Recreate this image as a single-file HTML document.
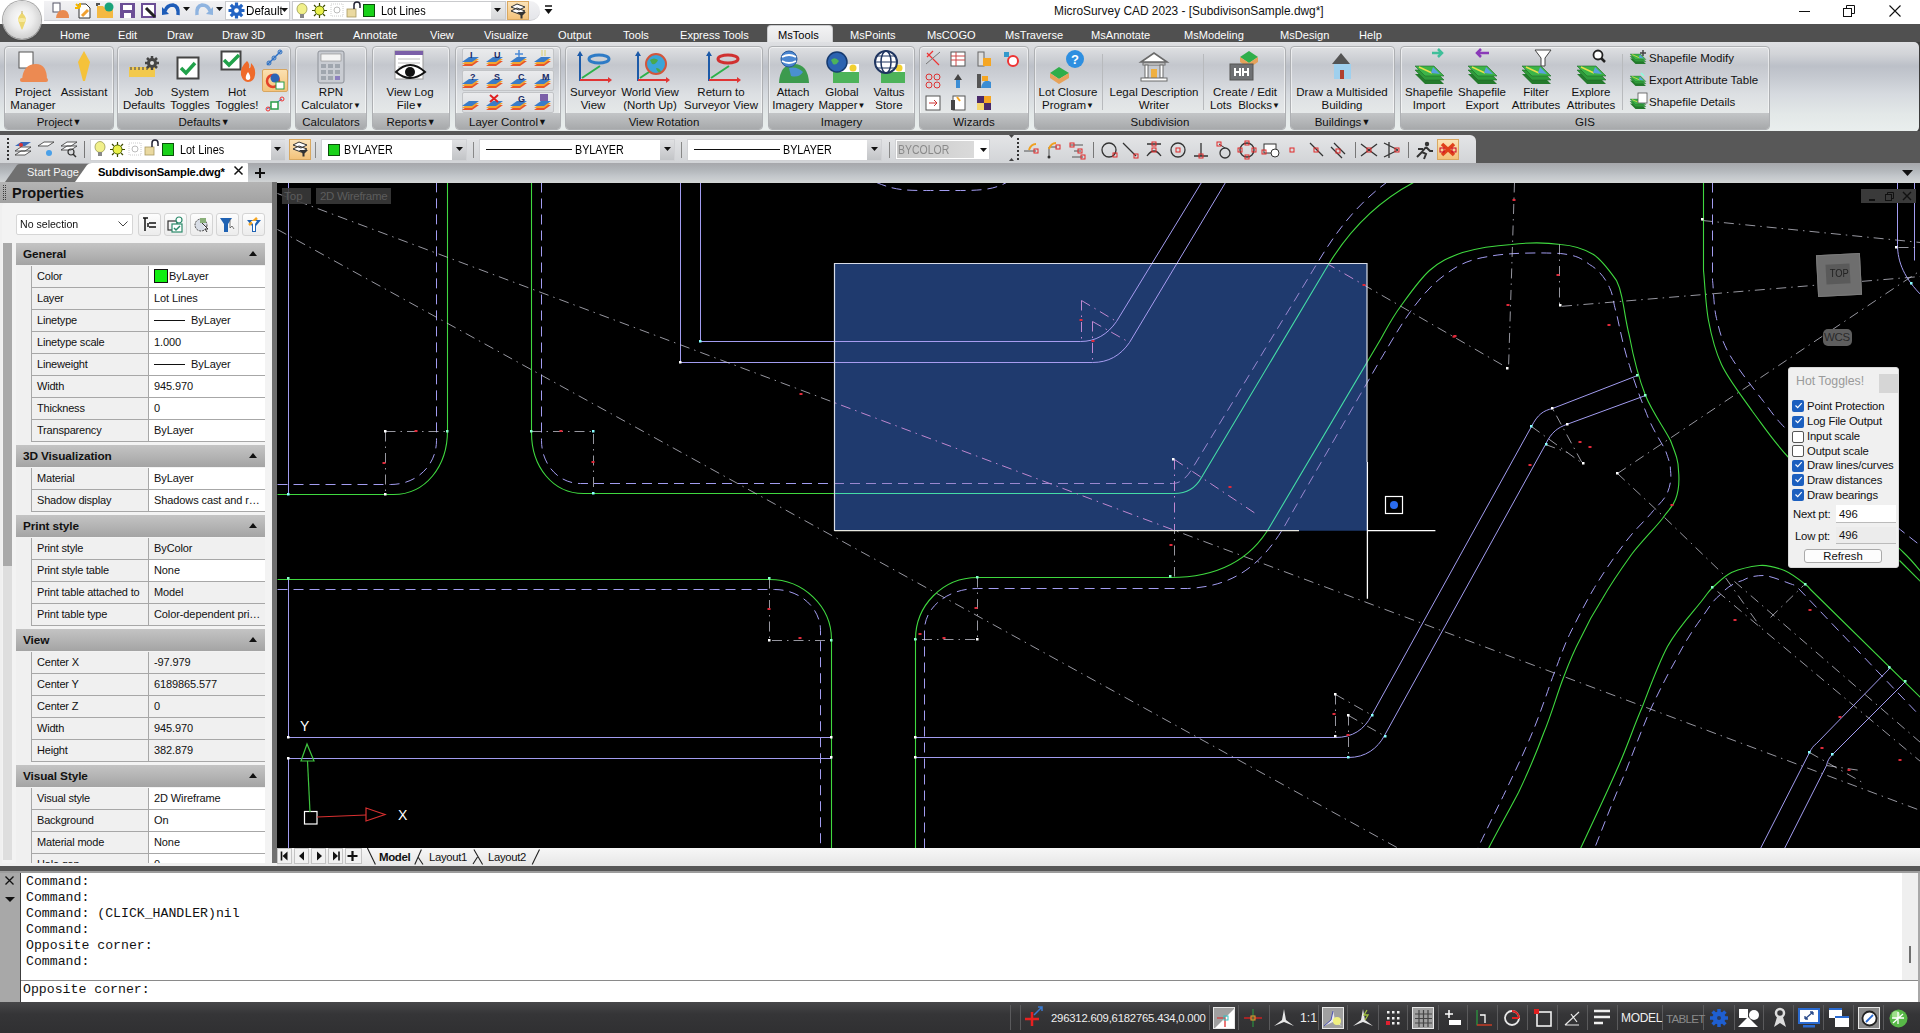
<!DOCTYPE html>
<html><head><meta charset="utf-8">
<style>
*{margin:0;padding:0;box-sizing:border-box}
html,body{width:1920px;height:1033px;overflow:hidden;background:#3c3c3c;font-family:"Liberation Sans",sans-serif;font-size:12px;color:#000}
.a{position:absolute}
svg{position:absolute;overflow:visible}
#title{left:0;top:0;width:1920px;height:24px;background:#fff}
#tabs{left:0;top:24px;width:1920px;height:18px;background:#505050}
#ribbon{left:0;top:42px;width:1919px;height:90px;border-radius:0 5px 5px 0;background:linear-gradient(#dfe0e3 0px,#d2d4d8 12px,#bcc0c8 24px,#c6cad1 36px,#d6dadf 52px,#e3e8e8 72px,#eaefee 90px)}
#band{left:0;top:131px;width:1920px;height:32px;background:#585858}
#tb{left:0;top:135px;width:1476px;height:28px;background:linear-gradient(#e4e5e7,#d2d4d7);border-radius:0 6px 0 0}
#doctabs{left:0;top:163px;width:1920px;height:19px;background:linear-gradient(#a6a7ab,#b1b5b9 35%,#c3c7cb 70%,#d0d3d4)}
.tab{position:absolute;top:27px;color:#fff;font-size:11.1px;line-height:16px;white-space:nowrap}
.pn{position:absolute;top:46px;height:84px;border:1px solid #aeb0b3;box-shadow:inset 0 0 0 1px rgba(255,255,255,.55);border-radius:4px;background:linear-gradient(#dfe0e3 0px,#d3d5d9 8px,#c4c7cd 18px,#cdd0d6 30px,#dde0e3 48px,#e6e9e9 68px,#e9ecec 84px);overflow:hidden}
.pl{position:absolute;left:0;right:0;bottom:0;height:16px;padding-top:2px;background:linear-gradient(#c3c5c7,#a7a9ab);text-align:center;font-size:11.5px;line-height:15px;color:#111;white-space:nowrap}
.bt{position:absolute;top:86px;font-size:11.5px;line-height:12.7px;text-align:center;white-space:nowrap;color:#111;transform:translateX(-50%)}
.ic{position:absolute}
.sep{position:absolute;width:1px;background:#b8babd}
.cb{position:absolute;background:#fff;border:1px solid #b5b7ba}
.dd{position:absolute;right:0;top:0;bottom:0;width:14px;background:linear-gradient(#e2e3e5,#c4c6c9)}
.dd:after{content:"";position:absolute;left:4px;top:8px;border-left:3px solid transparent;border-right:3px solid transparent;border-top:4px solid #111}
.prow{position:absolute;left:31px;width:234px;height:22px;border-bottom:1px solid #a7a7a7;border-left:1px solid #a7a7a7;font-size:11px;line-height:21px;color:#111}
.prow .n{position:absolute;left:0;top:0;width:117px;height:21px;background:#f0f0f0;border-right:1px solid #a7a7a7;padding-left:5px;white-space:nowrap;overflow:hidden;letter-spacing:-0.2px}
.prow .v{position:absolute;left:117px;top:0;width:116px;height:21px;background:#fff;padding-left:5px;padding-right:2px;white-space:nowrap;overflow:hidden;text-overflow:ellipsis;letter-spacing:-0.1px}
.phd{position:absolute;left:16px;width:249px;height:22px;background:linear-gradient(#c4c4c4,#a4a4a4);font-weight:bold;font-size:11.8px;line-height:22px;padding-left:7px;color:#111;letter-spacing:-0.1px}
.phd:after{content:"";position:absolute;right:8px;top:8px;border-left:4px solid transparent;border-right:4px solid transparent;border-bottom:5px solid #111}
</style></head><body>
<div id="title" class="a"></div>
<div id="tabs" class="a"></div>
<!-- QAT strip -->
<div class="a" style="left:44px;top:1px;width:496px;height:20px;background:linear-gradient(#f2f2f4,#e4e5e9);border-bottom:1px solid #cfd0d4;border-radius:0 10px 10px 0"></div>
<!-- app button -->
<div class="a" style="left:3px;top:1px;width:38px;height:38px;border-radius:50%;background:radial-gradient(circle at 50% 45%,#fdfdfd 0%,#ececec 40%,#d2d2d2 70%,#b4b4b4 88%,#8a8a8a 100%);box-shadow:0 0 0 1px #a6a6a6,0 1px 2px rgba(0,0,0,.35)"></div>
<svg style="left:14px;top:10px" width="16" height="22"><path d="M8 3 Q12 6 12 10 L9 18 Q8 21 7 18 L4 10 Q4 6 8 3 Z" fill="#ecd770"/><ellipse cx="8" cy="10" rx="4" ry="2" fill="#f6e9a0"/><path d="M8 1 v3" stroke="#c9b050"/></svg>
<!-- QAT icons -->
<svg style="left:52px;top:2px" width="18" height="17"><rect x="1" y="1" width="7" height="9" fill="#fff" stroke="#556" stroke-width="1"/><path d="M4 16 Q5 8 11 8 Q17 8 17 16 Z" fill="#e98a4f"/></svg>
<svg style="left:74px;top:2px" width="18" height="17"><path d="M5 2 h7 l4 4 v10 h-11 z" fill="#fff" stroke="#333"/><path d="M2 2 l4 4 M6 1 v4 M1 6 h4" stroke="#f5b800" stroke-width="2"/><path d="M8 14 l6 -6" stroke="#f0a030" stroke-width="3"/></svg>
<svg style="left:96px;top:2px" width="18" height="17"><path d="M1 4 h6 l2 2 h8 v10 h-16 z" fill="#f4b942"/><path d="M1 4 v-2 h3" stroke="#555" stroke-width="2" fill="none"/><circle cx="13" cy="5" r="4.5" fill="#1aa37a"/></svg>
<svg style="left:119px;top:2px" width="17" height="17"><rect x="1" y="1" width="15" height="15" fill="#6c4f96"/><rect x="4" y="3" width="9" height="5" fill="#fff"/><rect x="5" y="11" width="7" height="5" fill="#fff"/></svg>
<svg style="left:140px;top:2px" width="18" height="17"><rect x="1" y="1" width="15" height="15" fill="#6c4f96"/><rect x="3" y="3" width="11" height="11" fill="#fff"/><path d="M6 6 l9 9" stroke="#222" stroke-width="3"/></svg>
<svg style="left:162px;top:3px" width="18" height="15"><path d="M3 8 Q5 2 11 2 Q17 3 16 12" stroke="#1d5cb8" stroke-width="3.5" fill="none"/><path d="M0 4 L7 11 L0 12 Z" fill="#1d5cb8"/></svg>
<svg style="left:183px;top:7px" width="8" height="6"><path d="M0 0 h7 l-3.5 4 z" fill="#111"/></svg>
<svg style="left:195px;top:3px" width="18" height="15"><path d="M15 8 Q13 2 7 2 Q1 3 2 12" stroke="#8fb4e0" stroke-width="3.5" fill="none"/><path d="M18 4 L11 11 L18 12 Z" fill="#8fb4e0"/></svg>
<svg style="left:216px;top:7px" width="8" height="6"><path d="M0 0 h7 l-3.5 4 z" fill="#111"/></svg>
<!-- Default combo -->
<div class="cb" style="left:225px;top:1px;width:65px;height:19px;border-color:#c9cacd"></div>
<svg style="left:228px;top:2px" width="17" height="17"><circle cx="8.5" cy="8.5" r="5.5" fill="#2364c4"/><path d="M8.5 0.5 v16 M0.5 8.5 h16 M2.8 2.8 l11.4 11.4 M14.2 2.8 l-11.4 11.4" stroke="#2364c4" stroke-width="3.2"/><circle cx="8.5" cy="8.5" r="2.3" fill="#fff"/></svg>
<div class="a" style="left:246px;top:3px;font-size:12.5px;line-height:16px;color:#000;transform:scaleX(.93);transform-origin:0 0">Default</div>
<svg style="left:281px;top:8px" width="8" height="6"><path d="M0 0 h7 l-3.5 4 z" fill="#111"/></svg>
<!-- Layer combo -->
<div class="cb" style="left:292px;top:1px;width:214px;height:19px;border-color:#c9cacd"></div>
<div class="a" style="left:491px;top:2px;width:14px;height:17px;background:linear-gradient(#eceded,#d7d8da)"></div>
<svg style="left:494px;top:8px" width="8" height="6"><path d="M0 0 h7 l-3.5 4 z" fill="#111"/></svg>
<svg style="left:296px;top:3px" width="14" height="17"><ellipse cx="6" cy="6" rx="5" ry="5.5" fill="#f1f08a" stroke="#9a9a50" stroke-width=".8"/><rect x="4" y="11" width="4" height="4" fill="#888"/></svg>
<svg style="left:312px;top:3px" width="15" height="15"><circle cx="7.5" cy="7.5" r="4.5" fill="#e9f04a" stroke="#556b00" stroke-width="1"/><path d="M7.5 0 v3 M7.5 12 v3 M0 7.5 h3 M12 7.5 h3 M2 2 l2 2 M11 11 l2 2 M13 2 l-2 2 M2 13 l2 -2" stroke="#3d4a00" stroke-width="1.2"/></svg>
<svg style="left:330px;top:3px" width="14" height="14"><rect x="1" y="1" width="12" height="12" fill="none" stroke="#ccc" stroke-dasharray="1 1"/><circle cx="7" cy="7" r="3" fill="none" stroke="#bbb"/></svg>
<svg style="left:346px;top:2px" width="15" height="16"><rect x="1" y="7" width="9" height="8" fill="#ead9a0" stroke="#a89860" stroke-width=".8"/><path d="M8 7 v-4 a3 3 0 0 1 6 0 v3" stroke="#223" stroke-width="1.5" fill="none"/></svg>
<div class="a" style="left:363px;top:4px;width:12px;height:13px;background:#19d119;border:1px solid #0a500a"></div>
<div class="a" style="left:381px;top:3px;font-size:12.5px;line-height:16px;transform:scaleX(.88);transform-origin:0 0">Lot Lines</div>
<!-- filter btn -->
<div class="a" style="left:507px;top:1px;width:22px;height:19px;background:linear-gradient(#fbe3b8,#f3c27a);border:1px solid #d9a860"></div>
<svg style="left:509px;top:3px" width="18" height="16"><path d="M2 4 l6 -3 l8 3 l-6 3 z M2 8 l6 -3 l8 3 l-6 3 z" fill="#fff" stroke="#333" stroke-width="1"/><path d="M8 9 h9 l-3.5 3.5 v3 l-2 0 v-3 z" fill="#333"/></svg>
<svg style="left:544px;top:5px" width="9" height="10"><path d="M1 1 h7" stroke="#111" stroke-width="1.5"/><path d="M0.5 4 h8 l-4 5 z" fill="#111"/></svg>
<!-- title -->
<div class="a" style="left:1054px;top:3px;font-size:11.9px;line-height:16px;color:#111;white-space:nowrap">MicroSurvey CAD 2023 - [SubdivisonSample.dwg*]</div>
<!-- window controls -->
<div class="a" style="left:1799px;top:11px;width:11px;height:1px;background:#111"></div>
<svg style="left:1843px;top:5px" width="12" height="12"><rect x="0.5" y="3.5" width="8" height="8" fill="none" stroke="#111"/><path d="M3.5 3.5 v-3 h8 v8 h-3" fill="none" stroke="#111"/></svg>
<svg style="left:1889px;top:5px" width="12" height="12"><path d="M0.5 0.5 L11.5 11.5 M11.5 0.5 L0.5 11.5" stroke="#111" stroke-width="1.1"/></svg>
<!-- ribbon tabs -->
<div class="a" style="left:767px;top:25px;width:66px;height:19px;background:linear-gradient(#f3f3f4,#e3e4e6);border-radius:4px 4px 0 0;border:1px solid #c9cacd;border-bottom:none"></div>
<div class="tab" style="left:60px">Home</div>
<div class="tab" style="left:118px">Edit</div>
<div class="tab" style="left:167px">Draw</div>
<div class="tab" style="left:222px">Draw 3D</div>
<div class="tab" style="left:295px">Insert</div>
<div class="tab" style="left:353px">Annotate</div>
<div class="tab" style="left:430px">View</div>
<div class="tab" style="left:484px">Visualize</div>
<div class="tab" style="left:558px">Output</div>
<div class="tab" style="left:623px">Tools</div>
<div class="tab" style="left:680px">Express Tools</div>
<div class="tab" style="left:778px;color:#000">MsTools</div>
<div class="tab" style="left:850px">MsPoints</div>
<div class="tab" style="left:927px">MsCOGO</div>
<div class="tab" style="left:1005px">MsTraverse</div>
<div class="tab" style="left:1091px">MsAnnotate</div>
<div class="tab" style="left:1184px">MsModeling</div>
<div class="tab" style="left:1280px">MsDesign</div>
<div class="tab" style="left:1359px">Help</div>
<div id="ribbon" class="a"></div>
<div class="pn" style="left:4px;width:110px"><div class="pl">Project<span style="font-size:9px;vertical-align:1px">&#9660;</span></div></div>
<div class="pn" style="left:117px;width:174px"><div class="pl">Defaults<span style="font-size:9px;vertical-align:1px">&#9660;</span></div></div>
<div class="pn" style="left:295px;width:72px"><div class="pl">Calculators</div></div>
<div class="pn" style="left:372px;width:78px"><div class="pl">Reports<span style="font-size:9px;vertical-align:1px">&#9660;</span></div></div>
<div class="pn" style="left:455px;width:106px"><div class="pl">Layer Control<span style="font-size:9px;vertical-align:1px">&#9660;</span></div></div>
<div class="pn" style="left:565px;width:198px"><div class="pl">View Rotation</div></div>
<div class="pn" style="left:768px;width:147px"><div class="pl">Imagery</div></div>
<div class="pn" style="left:919px;width:110px"><div class="pl">Wizards</div></div>
<div class="pn" style="left:1034px;width:252px"><div class="pl">Subdivision</div></div>
<div class="pn" style="left:1290px;width:105px"><div class="pl">Buildings<span style="font-size:9px;vertical-align:1px">&#9660;</span></div></div>
<div class="pn" style="left:1400px;width:370px"><div class="pl">GIS</div></div>
<div class="bt" style="left:33px">Project<br>Manager</div>
<div class="bt" style="left:84px">Assistant</div>
<div class="bt" style="left:144px">Job<br>Defaults</div>
<div class="bt" style="left:190px">System<br>Toggles</div>
<div class="bt" style="left:237px">Hot<br>Toggles!</div>
<div class="bt" style="left:331px">RPN<br>Calculator<span style="font-size:8px;vertical-align:1px">&#9660;</span></div>
<div class="bt" style="left:410px">View Log<br>File<span style="font-size:8px;vertical-align:1px">&#9660;</span></div>
<div class="bt" style="left:593px">Surveyor<br>View</div>
<div class="bt" style="left:650px">World View<br>(North Up)</div>
<div class="bt" style="left:721px">Return to<br>Surveyor View</div>
<div class="bt" style="left:793px">Attach<br>Imagery</div>
<div class="bt" style="left:842px">Global<br>Mapper<span style="font-size:8px;vertical-align:1px">&#9660;</span></div>
<div class="bt" style="left:889px">Valtus<br>Store</div>
<div class="bt" style="left:1068px">Lot Closure<br>Program<span style="font-size:8px;vertical-align:1px">&#9660;</span></div>
<div class="bt" style="left:1154px">Legal Description<br>Writer</div>
<div class="bt" style="left:1245px">Create / Edit<br>Lots&nbsp; Blocks<span style="font-size:8px;vertical-align:1px">&#9660;</span></div>
<div class="bt" style="left:1342px">Draw a Multisided<br>Building</div>
<div class="bt" style="left:1429px">Shapefile<br>Import</div>
<div class="bt" style="left:1482px">Shapefile<br>Export</div>
<div class="bt" style="left:1536px">Filter<br>Attributes</div>
<div class="bt" style="left:1591px">Explore<br>Attributes</div>
<div class="a" style="left:1649px;top:51px;font-size:11.5px;line-height:14px;white-space:nowrap;color:#111">Shapefile Modify</div>
<div class="a" style="left:1649px;top:73px;font-size:11.5px;line-height:14px;white-space:nowrap;color:#111">Export Attribute Table</div>
<div class="a" style="left:1649px;top:95px;font-size:11.5px;line-height:14px;white-space:nowrap;color:#111">Shapefile Details</div>
<div class="sep" style="left:1102px;top:54px;height:56px"></div>
<div class="sep" style="left:1203px;top:54px;height:56px"></div>
<div class="sep" style="left:1622px;top:54px;height:56px"></div>
<svg style="left:17px;top:50px" width="32" height="34"><rect x="2" y="2" width="14" height="16" fill="#fff" stroke="#555"/><path d="M5 30 Q6 14 19 14 Q30 14 30 30 Z" fill="#ec8a52"/><rect x="3" y="28" width="28" height="4" rx="2" fill="#ec8a52"/></svg>
<svg style="left:76px;top:50px" width="16" height="32"><path d="M8 1 L14 12 L9 31 L7 31 L2 12 Z" fill="#f5c23a"/></svg>
<svg style="left:128px;top:55px" width="34" height="26"><rect x="1" y="12" width="26" height="10" fill="#f2c94c"/><path d="M3 12 v3 M7 12 v3 M11 12 v3 M15 12 v3 M19 12 v3" stroke="#555" stroke-width="1.2"/><circle cx="24" cy="8" r="5" fill="#444"/><path d="M24 1 v14 M17 8 h14 M19 3 l10 10 M29 3 l-10 10" stroke="#444" stroke-width="2.5"/><circle cx="24" cy="8" r="2" fill="#ddd"/></svg>
<svg style="left:176px;top:56px" width="26" height="24"><rect x="1.5" y="1.5" width="21" height="21" fill="#fff" stroke="#444" stroke-width="2"/><path d="M5 12 l5 5 l9 -10" stroke="#21a24a" stroke-width="3.5" fill="none"/></svg>
<svg style="left:220px;top:50px" width="36" height="36"><rect x="1.5" y="1.5" width="19" height="18" fill="#fff" stroke="#444" stroke-width="2"/><path d="M4 10 l5 5 l10 -10" stroke="#21a24a" stroke-width="3.5" fill="none"/><path d="M27 11 Q20 17 21 25 Q23 32 28 32 Q34 32 35 25 Q36 18 31 13 Q31 19 29 18 Q30 14 27 11 Z" fill="#ef6a2a"/><path d="M28 22 Q25 26 26 29 Q28 31 30 29 Q31 26 28 22 Z" fill="#fff"/></svg>
<svg style="left:265px;top:49px" width="18" height="18"><path d="M2 16 L16 2" stroke="#2a6fc4" stroke-width="1.5"/><circle cx="4" cy="14" r="2" fill="none" stroke="#2a6fc4"/><circle cx="9" cy="9" r="2" fill="none" stroke="#2a6fc4"/><circle cx="15" cy="3" r="2" fill="none" stroke="#2a6fc4"/></svg>
<div class="a" style="left:262px;top:69px;width:26px;height:23px;background:linear-gradient(#fbe0b0,#f4c47c);border:1px solid #d8a660;border-radius:2px"></div>
<svg style="left:265px;top:72px" width="20" height="18"><circle cx="8" cy="9" r="6" fill="none" stroke="#e3422a" stroke-width="2.5"/><circle cx="10" cy="6" r="4.5" fill="#2b63b5"/><rect x="11" y="10" width="8" height="7" fill="#fff" stroke="#2a9d4a"/></svg>
<svg style="left:265px;top:95px" width="20" height="18"><path d="M2 14 L17 4" stroke="#2a6fc4"/><circle cx="3" cy="14" r="2" fill="none" stroke="#e33"/><circle cx="17" cy="4" r="2" fill="none" stroke="#e33"/><rect x="6" y="7" width="7" height="7" fill="#fff" stroke="#2a9d4a" stroke-width="1.5"/></svg>
<svg style="left:316px;top:50px" width="30" height="34"><rect x="2" y="1" width="26" height="32" rx="2" fill="#c9ccd2" stroke="#8c9097"/><rect x="5" y="4" width="20" height="7" fill="#f4f4f4" stroke="#888" stroke-width=".6"/><g fill="#a0a6ae"><rect x="5" y="14" width="5" height="4"/><rect x="12" y="14" width="5" height="4"/><rect x="19" y="14" width="5" height="4"/><rect x="5" y="20" width="5" height="4"/><rect x="12" y="20" width="5" height="4"/><rect x="19" y="20" width="5" height="4"/><rect x="5" y="26" width="5" height="4"/><rect x="12" y="26" width="5" height="4"/><rect x="19" y="26" width="5" height="4" fill="#8c7fbf"/></g></svg>
<svg style="left:393px;top:50px" width="34" height="34"><rect x="2" y="1" width="28" height="28" fill="#fff" stroke="#999"/><rect x="2" y="1" width="28" height="4" fill="#7b5fa8"/><path d="M5 9 h22 M5 13 h22 M5 17 h22 M5 21 h22" stroke="#bbb"/><path d="M3 22 Q17 8 32 22 Q17 34 3 22 Z" fill="#fff" stroke="#111" stroke-width="2"/><circle cx="17" cy="22" r="5" fill="#111"/></svg>
<div class="a" style="left:462px;top:48px;width:92px;height:21px;border:1px solid #c2c4c7;border-radius:2px;background:linear-gradient(#eaebed,#d9dbde)"></div>
<div class="a" style="left:462px;top:70px;width:92px;height:21px;border:1px solid #c2c4c7;border-radius:2px;background:linear-gradient(#eaebed,#d9dbde)"></div>
<div class="a" style="left:462px;top:92px;width:92px;height:21px;border:1px solid #c2c4c7;border-radius:2px;background:linear-gradient(#eaebed,#d9dbde)"></div>
<svg style="left:461px;top:50px" width="20" height="18"><path d="M1 16 L8 11 L18 11 L11 16 Z" fill="#e9542a"/><path d="M1 14 L8 9 L18 9 L11 14 Z" fill="#f2a530"/><path d="M1 12 L8 7 L18 7 L11 12 Z" fill="#3a7cc8"/><text x="9" y="8" font-size="9" font-weight="bold" font-family="Liberation Sans" fill="#1a2a66">I</text></svg>
<svg style="left:485px;top:50px" width="20" height="18"><path d="M1 16 L8 11 L18 11 L11 16 Z" fill="#e9542a"/><path d="M1 14 L8 9 L18 9 L11 14 Z" fill="#f2a530"/><path d="M1 12 L8 7 L18 7 L11 12 Z" fill="#3a7cc8"/><text x="9" y="8" font-size="9" font-weight="bold" font-family="Liberation Sans" fill="#1a2a66">U</text></svg>
<svg style="left:509px;top:50px" width="20" height="18"><path d="M1 16 L8 11 L18 11 L11 16 Z" fill="#e9542a"/><path d="M1 14 L8 9 L18 9 L11 14 Z" fill="#f2a530"/><path d="M1 12 L8 7 L18 7 L11 12 Z" fill="#3a7cc8"/><path d="M10 0 v7 M6 4 h8" stroke="#4a8ad8" stroke-width="1.5"/></svg>
<svg style="left:533px;top:50px" width="20" height="18"><path d="M1 16 L8 11 L18 11 L11 16 Z" fill="#e9542a"/><path d="M1 14 L8 9 L18 9 L11 14 Z" fill="#f2a530"/><path d="M1 12 L8 7 L18 7 L11 12 Z" fill="#3a7cc8"/><path d="M9 0 v6 M12 0 v6" stroke="#dcd06a" stroke-width="1"/></svg>
<svg style="left:461px;top:72px" width="20" height="18"><path d="M1 16 L8 11 L18 11 L11 16 Z" fill="#e9542a"/><path d="M1 14 L8 9 L18 9 L11 14 Z" fill="#f2a530"/><path d="M1 12 L8 7 L18 7 L11 12 Z" fill="#3a7cc8"/><text x="9" y="8" font-size="9" font-weight="bold" font-family="Liberation Sans" fill="#1a2a66">?</text></svg>
<svg style="left:485px;top:72px" width="20" height="18"><path d="M1 16 L8 11 L18 11 L11 16 Z" fill="#e9542a"/><path d="M1 14 L8 9 L18 9 L11 14 Z" fill="#f2a530"/><path d="M1 12 L8 7 L18 7 L11 12 Z" fill="#3a7cc8"/><text x="9" y="8" font-size="9" font-weight="bold" font-family="Liberation Sans" fill="#1a2a66">S</text></svg>
<svg style="left:509px;top:72px" width="20" height="18"><path d="M1 16 L8 11 L18 11 L11 16 Z" fill="#e9542a"/><path d="M1 14 L8 9 L18 9 L11 14 Z" fill="#f2a530"/><path d="M1 12 L8 7 L18 7 L11 12 Z" fill="#3a7cc8"/><text x="9" y="8" font-size="9" font-weight="bold" font-family="Liberation Sans" fill="#1a2a66">C</text></svg>
<svg style="left:533px;top:72px" width="20" height="18"><path d="M1 16 L8 11 L18 11 L11 16 Z" fill="#e9542a"/><path d="M1 14 L8 9 L18 9 L11 14 Z" fill="#f2a530"/><path d="M1 12 L8 7 L18 7 L11 12 Z" fill="#3a7cc8"/><text x="9" y="8" font-size="9" font-weight="bold" font-family="Liberation Sans" fill="#1a2a66">M</text></svg>
<svg style="left:461px;top:94px" width="20" height="18"><path d="M1 16 L8 11 L18 11 L11 16 Z" fill="#e9542a"/><path d="M1 14 L8 9 L18 9 L11 14 Z" fill="#f2a530"/><path d="M1 12 L8 7 L18 7 L11 12 Z" fill="#3a7cc8"/></svg>
<svg style="left:485px;top:94px" width="20" height="18"><path d="M1 16 L8 11 L18 11 L11 16 Z" fill="#e9542a"/><path d="M1 14 L8 9 L18 9 L11 14 Z" fill="#f2a530"/><path d="M1 12 L8 7 L18 7 L11 12 Z" fill="#3a7cc8"/><path d="M5 1 l8 7 M13 1 l-8 7" stroke="#e02020" stroke-width="2"/></svg>
<svg style="left:509px;top:94px" width="20" height="18"><path d="M1 16 L8 11 L18 11 L11 16 Z" fill="#e9542a"/><path d="M1 14 L8 9 L18 9 L11 14 Z" fill="#f2a530"/><path d="M1 12 L8 7 L18 7 L11 12 Z" fill="#3a7cc8"/><text x="9" y="8" font-size="9" font-weight="bold" font-family="Liberation Sans" fill="#1a2a66">G</text></svg>
<svg style="left:533px;top:94px" width="20" height="18"><path d="M1 16 L8 11 L18 11 L11 16 Z" fill="#e9542a"/><path d="M1 14 L8 9 L18 9 L11 14 Z" fill="#f2a530"/><path d="M1 12 L8 7 L18 7 L11 12 Z" fill="#3a7cc8"/><rect x="7" y="0" width="8" height="7" fill="#7b5fa8"/></svg>
<svg style="left:576px;top:50px" width="36" height="34"><path d="M4 4 v26 h28" stroke="#1c5aa8" stroke-width="2" fill="none"/><path d="M4 30 h28" stroke="#e03434" stroke-width="2"/><path d="M32 27 l4 3 l-4 3 z" fill="#e03434"/><path d="M1 6 l3 -5 l3 5 z" fill="#1c5aa8"/><path d="M6 28 L24 16" stroke="#2db04a" stroke-width="2"/><ellipse cx="23" cy="9" rx="10" ry="4" fill="none" stroke="#2e7bc6" stroke-width="3"/></svg>
<svg style="left:634px;top:50px" width="36" height="34"><path d="M4 4 v26 h28" stroke="#1c5aa8" stroke-width="2" fill="none"/><path d="M4 30 h28" stroke="#e03434" stroke-width="2"/><path d="M32 27 l4 3 l-4 3 z" fill="#e03434"/><path d="M1 6 l3 -5 l3 5 z" fill="#1c5aa8"/><path d="M6 28 L24 16" stroke="#2db04a" stroke-width="2"/><circle cx="22" cy="14" r="10" fill="#3ba5d8" stroke="#d2553c" stroke-width="2"/><path d="M16 10 q4 -3 8 0 q-2 5 -6 4 z M22 18 q4 0 5 4 q-4 1 -5 -4" fill="#49a84c"/></svg>
<svg style="left:705px;top:50px" width="36" height="34"><path d="M4 4 v26 h28" stroke="#1c5aa8" stroke-width="2" fill="none"/><path d="M4 30 h28" stroke="#e03434" stroke-width="2"/><path d="M32 27 l4 3 l-4 3 z" fill="#e03434"/><path d="M1 6 l3 -5 l3 5 z" fill="#1c5aa8"/><path d="M6 28 L24 16" stroke="#2db04a" stroke-width="2"/><ellipse cx="23" cy="9" rx="10" ry="4" fill="none" stroke="#d03030" stroke-width="3"/></svg>
<svg style="left:777px;top:50px" width="34" height="34"><path d="M2 33 Q3 14 17 14 Q31 14 32 33 Z" fill="#3c9a4e"/><path d="M12 18 Q20 16 26 22 Q22 28 14 26 Z" fill="#4a90d0"/><circle cx="12" cy="9" r="8" fill="#4a86d0" stroke="#2a5a9a"/><path d="M5 7 q7 -4 14 0 M5 11 q7 4 14 0" stroke="#fff" stroke-width="1.8" fill="none"/></svg>
<svg style="left:825px;top:50px" width="36" height="34"><rect x="8" y="14" width="26" height="19" fill="#4db35a"/><rect x="8" y="14" width="26" height="8" fill="#fff"/><circle cx="28" cy="18" r="3.5" fill="#f2d030"/><circle cx="12" cy="12" r="10" fill="#2c63b0" stroke="#153a70" stroke-width="1.5"/><path d="M6 10 q4 -4 8 1 q-3 5 -6 3 z" fill="#4db35a"/></svg>
<svg style="left:873px;top:50px" width="34" height="34"><rect x="8" y="14" width="24" height="19" fill="#4db35a"/><rect x="8" y="14" width="24" height="8" fill="#fff"/><circle cx="26" cy="18" r="3.5" fill="#f2d030"/><circle cx="13" cy="12" r="11" fill="#fff" stroke="#1f3560" stroke-width="2"/><ellipse cx="13" cy="12" rx="5" ry="11" fill="none" stroke="#1f3560" stroke-width="1.5"/><path d="M2 12 h22 M4 6 h18 M4 18 h18" stroke="#1f3560" stroke-width="1.2"/></svg>
<svg style="left:924px;top:50px" width="18" height="18"><path d="M3 3 l12 12 M9 1 l-6 6" stroke="#e33" stroke-width="1.2"/><path d="M2 14 l14 -12" stroke="#777"/></svg>
<svg style="left:949px;top:50px" width="18" height="18"><rect x="2" y="2" width="14" height="14" fill="#fff" stroke="#555"/><path d="M2 6 h14 M2 10 h14 M7 2 v14" stroke="#c44"/></svg>
<svg style="left:975px;top:50px" width="18" height="18"><rect x="3" y="2" width="6" height="14" fill="#ddd" stroke="#666"/><path d="M8 8 h8 v8 h-8 z" fill="#f5a623"/></svg>
<svg style="left:1002px;top:50px" width="18" height="18"><circle cx="11" cy="11" r="5" fill="#fff" stroke="#e33" stroke-width="2"/><rect x="2" y="2" width="5" height="5" fill="#39c"/></svg>
<svg style="left:924px;top:72px" width="18" height="18"><g fill="none" stroke="#d33"><circle cx="5" cy="5" r="3"/><circle cx="13" cy="5" r="3"/><circle cx="5" cy="13" r="3"/><circle cx="13" cy="13" r="3"/></g></svg>
<svg style="left:949px;top:72px" width="18" height="18"><path d="M9 2 l-4 6 h8 z" fill="#444"/><rect x="7" y="8" width="4" height="8" fill="#3b8dd4"/></svg>
<svg style="left:975px;top:72px" width="18" height="18"><rect x="2" y="2" width="4" height="14" fill="#555"/><path d="M6 16 q2 -10 10 -6 v6 z" fill="#3b8dd4"/><rect x="7" y="4" width="6" height="5" fill="#f5a623"/></svg>
<svg style="left:924px;top:94px" width="18" height="18"><rect x="2" y="2" width="14" height="14" fill="#fff" stroke="#555"/><path d="M5 9 h8 l-3 -3 M13 9 l-3 3" stroke="#c33" fill="none"/></svg>
<svg style="left:949px;top:94px" width="18" height="18"><rect x="4" y="2" width="12" height="14" fill="#fff" stroke="#555"/><rect x="2" y="6" width="4" height="10" fill="#444"/><path d="M8 3 l3 4" stroke="#f5a623" stroke-width="2"/></svg>
<svg style="left:975px;top:94px" width="18" height="18"><rect x="2" y="2" width="14" height="14" fill="#4a2a6a"/><rect x="9" y="2" width="7" height="7" fill="#f5a623"/><rect x="2" y="9" width="7" height="7" fill="#f5d76e"/></svg>
<svg style="left:1045px;top:49px" width="40" height="36"><path d="M5 24 l9 -6 l10 6 l-10 6 z" fill="#2fae4a"/><path d="M5 24 v5 l9 6 l10 -6 v-5 l-10 6 z" fill="#e6a25a"/><circle cx="30" cy="10" r="9" fill="#2e8fe0"/><text x="26" y="15" font-size="13" font-weight="bold" font-family="Liberation Sans" fill="#fff">?</text></svg>
<svg style="left:1140px;top:51px" width="28" height="32"><path d="M1 11 L14 2 L27 11 Z" fill="#fff" stroke="#6a6a6a" stroke-width="1.6"/><rect x="3" y="12" width="22" height="2" fill="#fff" stroke="#6a6a6a"/><rect x="5" y="14" width="3" height="13" fill="#fff" stroke="#6a6a6a"/><rect x="20" y="14" width="3" height="13" fill="#fff" stroke="#6a6a6a"/><rect x="11" y="18" width="6" height="9" fill="#f0b040"/><rect x="1" y="27" width="26" height="3" fill="#fff" stroke="#6a6a6a"/></svg>
<svg style="left:1228px;top:49px" width="36" height="34"><path d="M12 8 l9 -6 l9 6 l-9 6 z" fill="#2fae4a"/><path d="M12 8 v5 l9 6 l9 -6 v-5 l-9 6 z" fill="#e6a25a"/><rect x="2" y="15" width="23" height="16" fill="#6e7073" stroke="#555"/><path d="M7 19 v8 M12 19 v8 M7 23 h5 M15 19 v8 M20 19 v8 M15 23 h5" stroke="#fff" stroke-width="2"/></svg>
<svg style="left:1330px;top:50px" width="26" height="34"><path d="M2 14 L11 3 L20 14 Z" fill="#545454"/><rect x="4" y="14" width="17" height="15" fill="#9fd0ee"/><rect x="10" y="20" width="4" height="9" fill="#b04030"/></svg>
<svg style="left:1412px;top:49px" width="36" height="36"><g transform="translate(3,17) scale(1.0)"><path d="M0 8 L19 8 L29 18 L10 18 Z" fill="#247a2c"/><path d="M0 4 L19 4 L29 14 L10 14 Z" fill="#2f9a3a" stroke="#1f6a28" stroke-width=".6"/><path d="M0 0 L19 0 L29 10 L10 10 Z" fill="#3cb448" stroke="#1f6a28" stroke-width=".6"/><path d="M4 1 L17 7" stroke="#e9e04a" stroke-width="1.4"/><path d="M18 1 L25 8 L16 7 Z" fill="#5aa0e0"/></g><path d="M20 4 h10 M26 0 l4 4 l-4 4" stroke="#3fbf9a" stroke-width="2.5" fill="none"/></svg>
<svg style="left:1465px;top:49px" width="36" height="36"><g transform="translate(3,17) scale(1.0)"><path d="M0 8 L19 8 L29 18 L10 18 Z" fill="#247a2c"/><path d="M0 4 L19 4 L29 14 L10 14 Z" fill="#2f9a3a" stroke="#1f6a28" stroke-width=".6"/><path d="M0 0 L19 0 L29 10 L10 10 Z" fill="#3cb448" stroke="#1f6a28" stroke-width=".6"/><path d="M4 1 L17 7" stroke="#e9e04a" stroke-width="1.4"/><path d="M18 1 L25 8 L16 7 Z" fill="#5aa0e0"/></g><path d="M12 4 h12 M16 0 l-4 4 l4 4" stroke="#8a3ab8" stroke-width="2.5" fill="none"/></svg>
<svg style="left:1519px;top:49px" width="36" height="36"><g transform="translate(3,17) scale(1.0)"><path d="M0 8 L19 8 L29 18 L10 18 Z" fill="#247a2c"/><path d="M0 4 L19 4 L29 14 L10 14 Z" fill="#2f9a3a" stroke="#1f6a28" stroke-width=".6"/><path d="M0 0 L19 0 L29 10 L10 10 Z" fill="#3cb448" stroke="#1f6a28" stroke-width=".6"/><path d="M4 1 L17 7" stroke="#e9e04a" stroke-width="1.4"/><path d="M18 1 L25 8 L16 7 Z" fill="#5aa0e0"/></g><path d="M16 1 h16 l-6 8 v8 l-4 0 v-8 z" fill="#fff" stroke="#444"/></svg>
<svg style="left:1574px;top:49px" width="36" height="36"><g transform="translate(3,17) scale(1.0)"><path d="M0 8 L19 8 L29 18 L10 18 Z" fill="#247a2c"/><path d="M0 4 L19 4 L29 14 L10 14 Z" fill="#2f9a3a" stroke="#1f6a28" stroke-width=".6"/><path d="M0 0 L19 0 L29 10 L10 10 Z" fill="#3cb448" stroke="#1f6a28" stroke-width=".6"/><path d="M4 1 L17 7" stroke="#e9e04a" stroke-width="1.4"/><path d="M18 1 L25 8 L16 7 Z" fill="#5aa0e0"/></g><circle cx="24" cy="6" r="4.5" fill="#fff" stroke="#222" stroke-width="1.8"/><path d="M27 9 l4 4" stroke="#222" stroke-width="2.5"/></svg>
<svg style="left:1629px;top:50px" width="20" height="16"><g transform="translate(1,4) scale(0.55)"><path d="M0 8 L19 8 L29 18 L10 18 Z" fill="#247a2c"/><path d="M0 4 L19 4 L29 14 L10 14 Z" fill="#2f9a3a" stroke="#1f6a28" stroke-width=".6"/><path d="M0 0 L19 0 L29 10 L10 10 Z" fill="#3cb448" stroke="#1f6a28" stroke-width=".6"/><path d="M4 1 L17 7" stroke="#e9e04a" stroke-width="1.4"/><path d="M18 1 L25 8 L16 7 Z" fill="#5aa0e0"/></g><path d="M14 0 v6 M11 3 h6" stroke="#444" stroke-width="1.5"/></svg>
<svg style="left:1629px;top:72px" width="20" height="16"><g transform="translate(1,4) scale(0.55)"><path d="M0 8 L19 8 L29 18 L10 18 Z" fill="#247a2c"/><path d="M0 4 L19 4 L29 14 L10 14 Z" fill="#2f9a3a" stroke="#1f6a28" stroke-width=".6"/><path d="M0 0 L19 0 L29 10 L10 10 Z" fill="#3cb448" stroke="#1f6a28" stroke-width=".6"/><path d="M4 1 L17 7" stroke="#e9e04a" stroke-width="1.4"/><path d="M18 1 L25 8 L16 7 Z" fill="#5aa0e0"/></g><path d="M12 1 l3 3" stroke="#8fd" stroke-width="1.5"/></svg>
<svg style="left:1629px;top:93px" width="20" height="18"><g transform="translate(1,6) scale(0.55)"><path d="M0 8 L19 8 L29 18 L10 18 Z" fill="#247a2c"/><path d="M0 4 L19 4 L29 14 L10 14 Z" fill="#2f9a3a" stroke="#1f6a28" stroke-width=".6"/><path d="M0 0 L19 0 L29 10 L10 10 Z" fill="#3cb448" stroke="#1f6a28" stroke-width=".6"/><path d="M4 1 L17 7" stroke="#e9e04a" stroke-width="1.4"/><path d="M18 1 L25 8 L16 7 Z" fill="#5aa0e0"/></g><rect x="9" y="0" width="9" height="10" fill="#fff" stroke="#555" stroke-width=".8"/></svg><div id="band" class="a"></div>
<div id="tb" class="a"></div>
<div class="a" style="left:7px;top:138px;width:2px;height:22px;background:repeating-linear-gradient(#333 0 2px,transparent 2px 4px)"></div>
<svg style="left:14px;top:140px" width="18" height="18"><path d="M1 6 l6 -4 h10 l-6 4 z" fill="#3a6ab8"/><circle cx="7" cy="5" r="2" fill="#d33"/><path d="M1 11 l6 -4 h10 l-6 4 z M1 15 l6 -4 h10 l-6 4 z" fill="#fff" stroke="#333" stroke-width=".8"/></svg>
<svg style="left:37px;top:140px" width="18" height="18"><path d="M1 6 l6 -4 h10 l-6 4 z" fill="#fff" stroke="#333" stroke-width=".8"/><circle cx="12" cy="13" r="3" fill="#4aa0e8"/></svg>
<svg style="left:60px;top:140px" width="18" height="18"><path d="M1 6 l6 -4 h10 l-6 4 z M1 10 l6 -4 h10 l-6 4 z" fill="#fff" stroke="#333" stroke-width=".8"/><circle cx="11" cy="12" r="3" fill="none" stroke="#333" stroke-width="1.2"/><path d="M13 14 l3 3" stroke="#333" stroke-width="1.5"/></svg>
<div class="sep" style="left:84px;top:141px;height:17px;background:#777"></div>
<div class="cb" style="left:90px;top:139px;width:195px;height:22px;border-color:#d0d1d4"></div>
<div class="a" style="left:271px;top:140px;width:14px;height:20px;background:linear-gradient(#e0e1e3,#c2c4c7)"></div>
<svg style="left:274px;top:147px" width="8" height="6"><path d="M0 0 h7 l-3.5 4 z" fill="#111"/></svg>
<svg style="left:94px;top:141px" width="14" height="18"><ellipse cx="6" cy="6" rx="5" ry="5.5" fill="#f1f08a" stroke="#9a9a50" stroke-width=".8"/><rect x="4" y="11" width="4" height="4" fill="#888"/></svg>
<svg style="left:110px;top:142px" width="15" height="15"><circle cx="7.5" cy="7.5" r="4.5" fill="#e9f04a" stroke="#556b00"/><path d="M7.5 0 v3 M7.5 12 v3 M0 7.5 h3 M12 7.5 h3 M2 2 l2 2 M11 11 l2 2 M13 2 l-2 2 M2 13 l2 -2" stroke="#3d4a00" stroke-width="1.2"/></svg>
<svg style="left:128px;top:142px" width="14" height="14"><rect x="1" y="1" width="12" height="12" fill="none" stroke="#ccc" stroke-dasharray="1 1"/><circle cx="7" cy="7" r="3" fill="none" stroke="#bbb"/></svg>
<svg style="left:144px;top:140px" width="15" height="16"><rect x="1" y="7" width="9" height="8" fill="#ead9a0" stroke="#a89860" stroke-width=".8"/><path d="M8 7 v-4 a3 3 0 0 1 6 0 v3" stroke="#223" stroke-width="1.5" fill="none"/></svg>
<div class="a" style="left:162px;top:143px;width:12px;height:13px;background:#19d119;border:1px solid #0a500a"></div>
<div class="a" style="left:180px;top:142px;font-size:12.5px;line-height:16px;transform:scaleX(.87);transform-origin:0 0">Lot Lines</div>
<div class="a" style="left:289px;top:139px;width:22px;height:21px;background:linear-gradient(#fbe3b8,#f3c27a);border:1px solid #d9a860"></div>
<svg style="left:291px;top:141px" width="18" height="17"><path d="M2 4 l6 -3 l8 3 l-6 3 z M2 8 l6 -3 l8 3 l-6 3 z" fill="#fff" stroke="#333"/><path d="M8 9 h9 l-3.5 3.5 v3 l-2 0 v-3 z" fill="#333"/></svg>
<div class="sep" style="left:315px;top:142px;height:16px;background:#888"></div>
<div class="sep" style="left:473px;top:142px;height:16px;background:#888"></div>
<div class="sep" style="left:681px;top:142px;height:16px;background:#888"></div>
<div class="sep" style="left:889px;top:142px;height:16px;background:#888"></div>
<div class="cb" style="left:321px;top:139px;width:146px;height:22px;border-color:#d0d1d4"></div>
<div class="a" style="left:452px;top:140px;width:14px;height:20px;background:linear-gradient(#e0e1e3,#c2c4c7)"></div>
<svg style="left:456px;top:147px" width="8" height="6"><path d="M0 0 h7 l-3.5 4 z" fill="#111"/></svg>
<div class="a" style="left:328px;top:144px;width:12px;height:12px;background:#19d119;border:1px solid #0a500a"></div>
<div class="a" style="left:344px;top:142px;font-size:12.5px;line-height:16px;transform:scaleX(.86);transform-origin:0 0">BYLAYER</div>
<div class="cb" style="left:479px;top:139px;width:196px;height:22px;border-color:#d0d1d4"></div>
<div class="a" style="left:660px;top:140px;width:14px;height:20px;background:linear-gradient(#e0e1e3,#c2c4c7)"></div>
<svg style="left:664px;top:147px" width="8" height="6"><path d="M0 0 h7 l-3.5 4 z" fill="#111"/></svg>
<div class="a" style="left:486px;top:149px;width:86px;height:1px;background:#111"></div>
<div class="a" style="left:575px;top:142px;font-size:12.5px;line-height:16px;transform:scaleX(.86);transform-origin:0 0">BYLAYER</div>
<div class="cb" style="left:687px;top:139px;width:195px;height:22px;border-color:#d0d1d4"></div>
<div class="a" style="left:867px;top:140px;width:14px;height:20px;background:linear-gradient(#e0e1e3,#c2c4c7)"></div>
<svg style="left:871px;top:147px" width="8" height="6"><path d="M0 0 h7 l-3.5 4 z" fill="#111"/></svg>
<div class="a" style="left:694px;top:149px;width:86px;height:1px;background:#111"></div>
<div class="a" style="left:783px;top:142px;font-size:12.5px;line-height:16px;transform:scaleX(.86);transform-origin:0 0">BYLAYER</div>
<div class="a" style="left:895px;top:139px;width:95px;height:21px;background:#fff;border:1px solid #d0d1d4"></div>
<div class="a" style="left:897px;top:141px;width:77px;height:17px;background:linear-gradient(90deg,#c9c9c9,#dadada)"></div>
<div class="a" style="left:898px;top:142px;font-size:12.5px;line-height:16px;color:#8a8a8a;transform:scaleX(.84);transform-origin:0 0">BYCOLOR</div>
<svg style="left:980px;top:148px" width="8" height="6"><path d="M0 0 h7 l-3.5 4 z" fill="#111"/></svg>
<div class="a" style="left:1017px;top:138px;width:2px;height:22px;background:repeating-linear-gradient(#333 0 2px,transparent 2px 4px)"></div>
<svg style="left:1009px;top:135px" width="6" height="4"><path d="M0 0 h5 l-2.5 3 z" fill="#444"/></svg>
<svg style="left:1009px;top:158px" width="6" height="4"><path d="M0 3 h5 l-2.5 -3 z" fill="#444"/></svg>
<svg style="left:1023px;top:141px" width="18" height="18"><path d="M1 10 h12" stroke="#555"/><rect x="11" y="8" width="4" height="4" fill="none" stroke="#e02828"/><path d="M6 9 q2 -6 7 -6" stroke="#f0a020" stroke-width="2" fill="none"/></svg>
<svg style="left:1046px;top:141px" width="18" height="18"><path d="M3 16 v-10 h8" stroke="#555" fill="none"/><circle cx="3" cy="16" r="1.5" fill="#333"/><rect x="10" y="4" width="4" height="4" fill="none" stroke="#e02828"/><path d="M3 8 q2 -6 7 -6" stroke="#f0a020" stroke-width="2" fill="none"/></svg>
<svg style="left:1068px;top:141px" width="18" height="18"><path d="M2 4 h13 M6 10 h7 M4 16 h11" stroke="#555"/><rect x="2" y="2" width="4" height="4" fill="none" stroke="#e02828"/><rect x="10" y="8" width="4" height="4" fill="none" stroke="#e02828"/><rect x="13" y="14" width="4" height="4" fill="none" stroke="#e02828"/></svg>
<svg style="left:1100px;top:141px" width="18" height="18"><circle cx="9" cy="9" r="7" fill="none" stroke="#333" stroke-width="1.3"/><rect x="13" y="12" width="4" height="4" fill="none" stroke="#e02828"/></svg>
<svg style="left:1121px;top:141px" width="18" height="18"><path d="M2 2 l13 13" stroke="#333" stroke-width="1.3"/><rect x="13" y="13" width="4" height="4" fill="none" stroke="#e02828"/></svg>
<svg style="left:1145px;top:141px" width="18" height="18"><path d="M2 15 q7 -10 14 0 M2 3 h14" stroke="#333" stroke-width="1.3" fill="none"/><rect x="7" y="1" width="4" height="4" fill="none" stroke="#e02828"/><rect x="7" y="7" width="4" height="4" fill="none" stroke="#e02828"/></svg>
<svg style="left:1169px;top:141px" width="18" height="18"><circle cx="9" cy="9" r="7" fill="none" stroke="#333" stroke-width="1.3"/><rect x="7" y="7" width="4" height="4" fill="none" stroke="#e02828"/></svg>
<svg style="left:1192px;top:141px" width="18" height="18"><path d="M9 2 v13 M2 15 h14" stroke="#333" stroke-width="1.3"/><rect x="7" y="13" width="4" height="4" fill="none" stroke="#e02828"/></svg>
<svg style="left:1215px;top:141px" width="18" height="18"><path d="M4 3 l6 4" stroke="#333"/><circle cx="10" cy="12" r="5" fill="none" stroke="#333" stroke-width="1.3"/><rect x="2" y="1" width="4" height="4" fill="none" stroke="#e02828"/></svg>
<svg style="left:1238px;top:141px" width="18" height="18"><circle cx="9" cy="9" r="7" fill="none" stroke="#333" stroke-width="1.3"/><rect x="7" y="0" width="4" height="4" fill="none" stroke="#e02828"/><rect x="0" y="7" width="4" height="4" fill="none" stroke="#e02828"/><rect x="14" y="7" width="4" height="4" fill="none" stroke="#e02828"/><rect x="7" y="14" width="4" height="4" fill="none" stroke="#e02828"/></svg>
<svg style="left:1262px;top:141px" width="18" height="18"><rect x="2" y="3" width="12" height="9" fill="#fff" stroke="#333"/><circle cx="13" cy="12" r="4" fill="#fff" stroke="#333"/><rect x="0" y="9" width="4" height="4" fill="none" stroke="#e02828"/></svg>
<svg style="left:1283px;top:141px" width="18" height="18"><rect x="7" y="7" width="4" height="4" fill="none" stroke="#e02828"/></svg>
<svg style="left:1307px;top:141px" width="18" height="18"><path d="M3 2 l13 13" stroke="#333" stroke-width="1.3"/><rect x="7" y="7" width="4" height="4" fill="none" stroke="#e02828"/></svg>
<svg style="left:1328px;top:141px" width="18" height="18"><path d="M3 6 l11 11 M6 2 l11 11" stroke="#333" stroke-width="1.3"/><rect x="8" y="8" width="4" height="4" fill="none" stroke="#e02828"/></svg>
<svg style="left:1360px;top:141px" width="18" height="18"><path d="M1 3 l16 12 M1 15 l16 -12" stroke="#333" stroke-width="1.3"/><rect x="7" y="7" width="4" height="4" fill="none" stroke="#e02828"/></svg>
<svg style="left:1383px;top:141px" width="18" height="18"><path d="M1 2 l14 7 M1 16 l14 -7 M6 1 v16" stroke="#333" stroke-width="1.3"/><rect x="12" y="7" width="4" height="4" fill="none" stroke="#e02828"/></svg>
<svg style="left:1415px;top:141px" width="18" height="18"><circle cx="12" cy="3" r="2.2" fill="#333"/><path d="M11 6 l-4 5 l4 2 l-2 5 M11 6 l4 4 h3 M8 8 l-5 0 M7 11 l-5 5" stroke="#333" stroke-width="2" fill="none"/></svg>
<div class="sep" style="left:1093px;top:142px;height:16px;background:#777"></div>
<div class="sep" style="left:1355px;top:142px;height:16px;background:#777"></div>
<div class="sep" style="left:1408px;top:142px;height:16px;background:#777"></div>
<div class="a" style="left:1437px;top:139px;width:22px;height:21px;background:linear-gradient(#fbe3b8,#f3c27a);border:1px solid #d9a860"></div>
<svg style="left:1439px;top:141px" width="18" height="17"><path d="M3 3 l12 11 M15 3 l-12 11" stroke="#e0401a" stroke-width="3.5"/><rect x="1" y="7" width="4" height="4" fill="none" stroke="#c02"/><rect x="13" y="7" width="4" height="4" fill="none" stroke="#c02"/></svg>
<div id="doctabs" class="a"></div>
<svg style="left:1902px;top:170px" width="12" height="7"><path d="M0 0 h11 l-5.5 6 z" fill="#111"/></svg>
<svg style="left:5px;top:164px" width="90" height="18"><path d="M0 18 L12 1 Q13 0 15 0 L84 0 L84 18 Z" fill="#707070"/></svg>
<div class="a" style="left:27px;top:165px;font-size:11px;line-height:15px;color:#f4f4f4">Start Page</div>
<svg style="left:75px;top:163px" width="176" height="19"><path d="M0 19 L12 2 Q14 0 17 0 L172 0 Q173 0 173 1 L173 19 Z" fill="#fff"/></svg>
<div class="a" style="left:98px;top:165px;font-size:11.2px;line-height:15px;color:#000;font-weight:bold;letter-spacing:-0.15px">SubdivisonSample.dwg*</div>
<svg style="left:234px;top:166px" width="9" height="9"><path d="M0.5 0.5 l8 8 M8.5 0.5 l-8 8" stroke="#111" stroke-width="1.5"/></svg>
<svg style="left:255px;top:168px" width="10" height="10"><path d="M5 0 v10 M0 5 h10" stroke="#111" stroke-width="2"/></svg><div class="a" style="left:0;top:182px;width:272px;height:681px;background:#f0f0f0"></div>
<div class="a" style="left:272px;top:182px;width:5px;height:681px;background:#707070"></div>
<div class="a" style="left:0;top:182px;width:272px;height:21px;background:linear-gradient(#b4b4b4,#a2a2a2)"></div>
<div class="a" style="left:3px;top:185px;width:3px;height:16px;background:repeating-linear-gradient(90deg,#333 0 1px,transparent 1px 2px),transparent;opacity:.9;-webkit-mask:repeating-linear-gradient(#000 0 1px,transparent 1px 2px)"></div>
<div class="a" style="left:12px;top:184px;font-size:14.5px;font-weight:bold;line-height:18px;color:#111">Properties</div>
<div class="a" style="left:2px;top:203px;width:270px;height:660px;background:#f3f3f3;border-radius:4px 4px 0 0"></div>
<div class="a" style="left:16px;top:214px;width:117px;height:21px;background:#fff;border:1px solid #d6d6d6;border-radius:2px"></div>
<div class="a" style="left:20px;top:217px;font-size:11.5px;line-height:15px;color:#111;transform:scaleX(.92);transform-origin:0 0">No selection</div>
<svg style="left:118px;top:221px" width="10" height="6"><path d="M0.5 0.5 l4.5 4.5 l4.5 -4.5" stroke="#444" fill="none"/></svg>
<div class="a" style="left:138px;top:213px;width:23px;height:23px;background:linear-gradient(#fdfdfd,#ececec);border:1px solid #d4d4d4;border-radius:3px"></div>
<div class="a" style="left:164px;top:213px;width:23px;height:23px;background:linear-gradient(#fdfdfd,#ececec);border:1px solid #d4d4d4;border-radius:3px"></div>
<div class="a" style="left:190px;top:213px;width:23px;height:23px;background:linear-gradient(#fdfdfd,#ececec);border:1px solid #d4d4d4;border-radius:3px"></div>
<div class="a" style="left:216px;top:213px;width:23px;height:23px;background:linear-gradient(#fdfdfd,#ececec);border:1px solid #d4d4d4;border-radius:3px"></div>
<div class="a" style="left:242px;top:213px;width:23px;height:23px;background:linear-gradient(#fdfdfd,#ececec);border:1px solid #d4d4d4;border-radius:3px"></div>
<svg style="left:141px;top:216px" width="17" height="17"><path d="M2 2 h5 M4 2 v13 M8 7 h7 M8 11 h7 M7 7 v4" stroke="#111" stroke-width="1.5"/></svg>
<svg style="left:167px;top:216px" width="17" height="17"><rect x="1" y="5" width="9" height="9" fill="none" stroke="#333" stroke-width="1.2"/><rect x="5" y="8" width="10" height="8" fill="#fff" stroke="#2b8a6a" stroke-width="1.2"/><circle cx="12" cy="4" r="3" fill="#fff" stroke="#2b8a6a" stroke-width="1.2"/><path d="M7 12 l2 2 l4 -4" stroke="#2b8a6a" stroke-width="1.5" fill="none"/></svg>
<svg style="left:193px;top:216px" width="17" height="17"><ellipse cx="8" cy="9" rx="6" ry="6" fill="#d8dde6" stroke="#444" stroke-dasharray="2 1"/><rect x="7" y="2" width="6" height="5" fill="#8ab07a"/><path d="M9 7 l6 6 l-3 0 l2 3" stroke="#333" fill="#fff"/></svg>
<svg style="left:219px;top:216px" width="17" height="17"><path d="M1 2 h12 l-4 6 v8 h-4 v-8 z" fill="#1f62b3"/><path d="M11 3 l0 9 l2 -2 l2 3" stroke="#555" fill="#fff" stroke-width=".8"/></svg>
<svg style="left:245px;top:216px" width="17" height="17"><path d="M2 4 h14 l-5 6 v6 h-4 v-6 z" fill="#1f62b3"/><path d="M4 9 l8 -7" stroke="#f5a623" stroke-width="2.5"/><path d="M6 5 h6 l-2 3 v7 h-2 v-7 z" fill="#fff"/></svg>
<div class="a" style="left:3px;top:243px;width:9px;height:617px;background:#dedede"></div>
<div class="a" style="left:3px;top:243px;width:9px;height:323px;background:#a9a9a9"></div>
<div class="a" style="left:16px;top:243px;width:15px;height:620px;background:#f0f0f0"></div>
<div class="phd" style="top:243px">General</div>
<div class="prow" style="top:265.5px"><div class="n">Color</div><div class="v" style="background:#fff"><span style="display:inline-block;width:14px;height:14px;background:#11ee11;border:1px solid #111;vertical-align:-3px;margin-right:1px"></span>ByLayer</div></div>
<div class="prow" style="top:287.5px"><div class="n">Layer</div><div class="v" style="background:#fff">Lot Lines</div></div>
<div class="prow" style="top:309.5px"><div class="n">Linetype</div><div class="v" style="background:#fff"><span style="display:inline-block;width:31px;height:1px;background:#111;vertical-align:3px;margin-right:6px"></span>ByLayer</div></div>
<div class="prow" style="top:331.5px"><div class="n">Linetype scale</div><div class="v" style="background:#fff">1.000</div></div>
<div class="prow" style="top:353.5px"><div class="n">Lineweight</div><div class="v" style="background:#fff"><span style="display:inline-block;width:31px;height:1px;background:#111;vertical-align:3px;margin-right:6px"></span>ByLayer</div></div>
<div class="prow" style="top:375.5px"><div class="n">Width</div><div class="v" style="background:#fff">945.970</div></div>
<div class="prow" style="top:397.5px"><div class="n">Thickness</div><div class="v" style="background:#fff">0</div></div>
<div class="prow" style="top:419.5px"><div class="n">Transparency</div><div class="v" style="background:#fff">ByLayer</div></div>
<div class="phd" style="top:445px">3D Visualization</div>
<div class="prow" style="top:467.5px"><div class="n">Material</div><div class="v" style="background:#fff">ByLayer</div></div>
<div class="prow" style="top:489.5px"><div class="n">Shadow display</div><div class="v" style="background:#fff">Shadows cast and receive</div></div>
<div class="phd" style="top:515px">Print style</div>
<div class="prow" style="top:537.5px"><div class="n">Print style</div><div class="v" style="background:#f0f0f0">ByColor</div></div>
<div class="prow" style="top:559.5px"><div class="n">Print style table</div><div class="v" style="background:#fff">None</div></div>
<div class="prow" style="top:581.5px"><div class="n">Print table attached to</div><div class="v" style="background:#f0f0f0">Model</div></div>
<div class="prow" style="top:603.5px"><div class="n">Print table type</div><div class="v" style="background:#f0f0f0">Color-dependent print styles</div></div>
<div class="phd" style="top:629px">View</div>
<div class="prow" style="top:651.5px"><div class="n">Center X</div><div class="v" style="background:#f0f0f0">-97.979</div></div>
<div class="prow" style="top:673.5px"><div class="n">Center Y</div><div class="v" style="background:#f0f0f0">6189865.577</div></div>
<div class="prow" style="top:695.5px"><div class="n">Center Z</div><div class="v" style="background:#f0f0f0">0</div></div>
<div class="prow" style="top:717.5px"><div class="n">Width</div><div class="v" style="background:#f0f0f0">945.970</div></div>
<div class="prow" style="top:739.5px"><div class="n">Height</div><div class="v" style="background:#f0f0f0">382.879</div></div>
<div class="phd" style="top:765px">Visual Style</div>
<div class="prow" style="top:787.5px"><div class="n">Visual style</div><div class="v" style="background:#fff">2D Wireframe</div></div>
<div class="prow" style="top:809.5px"><div class="n">Background</div><div class="v" style="background:#fff">On</div></div>
<div class="prow" style="top:831.5px"><div class="n">Material mode</div><div class="v" style="background:#fff">None</div></div>
<div class="prow" style="top:853.5px"><div class="n">Halo gap</div><div class="v" style="background:#fff">0</div></div>
<div class="a" style="left:16px;top:863px;width:256px;height:2px;background:#f0f0f0"></div><div class="a" style="left:277px;top:182px;width:1643px;height:666px;background:#000;overflow:hidden">
<svg style="left:0;top:0;overflow:hidden" width="1643" height="666" viewBox="277 182 1643 666">
<rect x="834.5" y="263.5" width="532.5" height="267" fill="#1d3a6c"/>
<g fill="none" transform="translate(.5 .5)">
<path d="M277 494 H393 C425 494 447 466 447 430 V182" stroke="#3fd83f" stroke-width="1.1"/>
<path d="M277 484 H390 C417 484 436 464 436 440 V182" stroke="#a29cf0" stroke-width="1" stroke-dasharray="10 6"/>
<path d="M385 431 H447 M385 431 V494" stroke="#d0d0dc" stroke-width="1" stroke-dasharray="10 5 1.5 5" opacity=".72"/>
<path d="M531 182 V432 C531 466 552 493 583 493 H1174 C1188 493 1196 486 1201 477 L1328 264 C1345 236 1370 205 1413 182" stroke="#3fd83f" stroke-width="1.1"/>
<path d="M541 182 V440 C541 464 558 483 580 483 H1172 C1181 483 1188 475 1193 466 L1316 264 C1335 232 1355 205 1386 182" stroke="#a29cf0" stroke-width="1" stroke-dasharray="10 6"/>
<path d="M531 431 H593 V493" stroke="#d0d0dc" stroke-width="1" stroke-dasharray="10 5 1.5 5" opacity=".72"/>
<path d="M680 182 V362 H1092 C1108 362 1120 355 1129 342 L1225 182" stroke="#a29cf0" stroke-width="1"/>
<path d="M700 182 V341 H1080 C1095 341 1107 334 1116 321 L1201 182" stroke="#a29cf0" stroke-width="1"/>
<path d="M1081 300 V342 M1092 321 V362 M1081 300 L1116 321 M1092 321 L1129 342" stroke="#d0d0dc" stroke-width="1" stroke-dasharray="10 5 1.5 5" opacity=".72"/>
<path d="M876 182 C895 190 905 190 930 190 H960 C985 190 995 188 1006 182" stroke="#a29cf0" stroke-width="1" stroke-dasharray="10 6"/>
<path d="M277 193 L1920 810" stroke="#d0d0dc" stroke-width="1" stroke-dasharray="10 5 1.5 5" opacity=".72"/>
<path d="M277 229 L1420 860" stroke="#d0d0dc" stroke-width="1" stroke-dasharray="10 5 1.5 5" opacity=".72"/>
<path d="M277 579 H769 C803 579 831 606 831 639 V848" stroke="#3fd83f" stroke-width="1.1"/>
<path d="M277 589 H774 C800 589 820 608 820 630 V848" stroke="#a29cf0" stroke-width="1" stroke-dasharray="10 6"/>
<path d="M769 578 V640 H831" stroke="#d0d0dc" stroke-width="1" stroke-dasharray="10 5 1.5 5" opacity=".72"/>
<path d="M288 579 V737 H831 M288 758 H831 M288 758 V848" stroke="#a29cf0" stroke-width="1"/>
<path d="M288 182 V494" stroke="#a29cf0" stroke-width="1"/>
<path d="M915 848 V639 C915 605 942 577 977 577 H1170 C1215 577 1250 560 1270 525 L1380 339  C1383 334 1391 318 1400 306 C1408 295 1419 279 1429 270 C1439 261 1448 257 1462 252 C1476 248 1495 245 1511 244 C1527 242 1546 242 1560 244 C1574 245 1583 248 1593 254 C1602 260 1611 273 1616 280 C1620 288 1620 290 1622 300 C1624 309 1625 320 1629 336 C1632 352 1638 377 1645 395 C1652 412 1664 428 1670 440 C1675 453 1678 460 1678 470 C1679 480 1678 491 1675 499 C1672 507 1669 508 1662 518 C1655 527 1641 541 1631 554 C1621 568 1610 584 1602 598 C1593 612 1586 625 1580 638 C1573 651 1569 661 1563 677 C1557 692 1551 714 1543 733 C1536 752 1527 773 1518 792 C1508 811 1494 836 1488 848 C1482 860 1481 862 1480 865" stroke="#3fd83f" stroke-width="1.1"/>
<path d="M924 848 V630 C924 606 948 588 977 588 H1187 C1230 586 1262 568 1290 515 L1380 359  C1385 351 1399 326 1410 311 C1420 297 1432 283 1445 274 C1458 264 1469 259 1488 256 C1507 252 1543 252 1560 253 C1577 255 1581 258 1589 264 C1598 269 1605 278 1609 287 C1613 295 1612 300 1616 313 C1619 326 1623 348 1629 365 C1634 383 1642 403 1648 418 C1654 432 1661 442 1665 450 C1668 459 1670 463 1670 470 C1671 477 1670 485 1667 492 C1664 499 1660 502 1653 510 C1646 519 1633 530 1624 543 C1614 556 1603 572 1594 587 C1585 602 1576 620 1569 634 C1562 649 1559 659 1552 677 C1546 694 1537 721 1528 741 C1520 760 1511 778 1503 795 C1494 813 1483 836 1477 848 C1472 859 1470 862 1469 865" stroke="#a29cf0" stroke-width="1" stroke-dasharray="10 6"/>
<path d="M977 577 V639 H915" stroke="#d0d0dc" stroke-width="1" stroke-dasharray="10 5 1.5 5" opacity=".72"/>
<path d="M1174 459 V576" stroke="#d0d0dc" stroke-width="1" stroke-dasharray="10 5 1.5 5" opacity=".72"/>
<path d="M1174 459 L1201 477 L1258 515" stroke="#d0d0dc" stroke-width="1" stroke-dasharray="10 5 1.5 5" opacity=".72"/>
<path d="M915 737 H1335 C1352 737 1364 729 1371 715 L1531 426 C1537 414 1543 410 1552 408 L1637 375" stroke="#a29cf0" stroke-width="1"/>
<path d="M915 757 H1348 C1365 757 1377 748 1384 735 L1545 444 C1551 431 1558 427 1566 424 L1645 395" stroke="#a29cf0" stroke-width="1"/>
<path d="M1335 694 V736 M1348 715 V757 M1335 694 L1372 715 M1348 715 L1385 736" stroke="#d0d0dc" stroke-width="1" stroke-dasharray="10 5 1.5 5" opacity=".72"/>
<path d="M1531 426 L1582 463 L1552 408 M1545 444 L1567 452" stroke="#d0d0dc" stroke-width="1" stroke-dasharray="10 5 1.5 5" opacity=".72"/>
<path d="M1514 182 L1508 368 L1328 264" stroke="#d0d0dc" stroke-width="1" stroke-dasharray="10 5 1.5 5" opacity=".72"/>
<path d="M1559 244 V306 L1920 276" stroke="#d0d0dc" stroke-width="1" stroke-dasharray="10 5 1.5 5" opacity=".72"/>
<path d="M1617 473 L1920 270" stroke="#d0d0dc" stroke-width="1" stroke-dasharray="10 5 1.5 5" opacity=".72"/>
<path d="M1617 473 L1662 515 L1722 573 L1761 628" stroke="#d0d0dc" stroke-width="1" stroke-dasharray="10 5 1.5 5" opacity=".72"/>
<path d="M1702 220 L1920 242" stroke="#d0d0dc" stroke-width="1" stroke-dasharray="10 5 1.5 5" opacity=".72"/>
<path d="M1703 182 V270  C1704 278 1705 304 1708 320 C1711 336 1714 349 1721 364 C1728 379 1741 395 1752 411 C1764 427 1773 441 1789 458 C1805 474 1831 494 1850 510 C1869 526 1889 538 1903 552 C1917 565 1930 584 1935 590" stroke="#3fd83f" stroke-width="1.1"/>
<path d="M1712 182 V280  C1713 286 1713 306 1716 318 C1719 330 1721 340 1729 354 C1737 368 1753 388 1763 401 C1773 414 1774 417 1789 432 C1804 447 1828 469 1850 488 C1872 507 1908 536 1920 545" stroke="#a29cf0" stroke-width="1" stroke-dasharray="10 6"/>
<path d="M1897 182 V244 C1897 262 1904 278 1922 296" stroke="#a29cf0" stroke-width="1"/>
<path d="M1914 182 V260" stroke="#a29cf0" stroke-width="1"/>
<path d="M1898 247 H1920" stroke="#d0d0dc" stroke-width="1" stroke-dasharray="10 5 1.5 5" opacity=".72"/>
<path d="M1575 860 C1576 858 1573 863 1580 848 C1587 833 1606 793 1616 770 C1627 746 1633 726 1642 706 C1650 685 1658 663 1667 646 C1677 628 1692 612 1700 602 C1708 592 1707 592 1712 587 C1718 582 1723 576 1731 572 C1738 569 1750 566 1759 565 C1767 564 1776 567 1784 570 C1791 573 1800 580 1805 584 C1809 587 1809 588 1810 589 L1920 697" stroke="#3fd83f" stroke-width="1.1"/>
<path d="M1590 860 C1591 858 1589 862 1594 848 C1600 833 1614 796 1624 774 C1633 751 1641 730 1649 711 C1658 692 1666 676 1675 660 C1683 644 1692 630 1700 619 C1708 608 1712 600 1720 594 C1726 587 1734 582 1742 580 C1749 576 1756 575 1764 575 C1772 576 1786 582 1792 584 C1798 586 1797 587 1798 588 L1920 716" stroke="#a29cf0" stroke-width="1" stroke-dasharray="10 6"/>
<path d="M1717 591 L1920 761 M1734 581 L1920 742 M1770 617 L1803 585" stroke="#d0d0dc" stroke-width="1" stroke-dasharray="10 5 1.5 5" opacity=".72"/>
<path d="M1760 848 L1809 752 C1811 748 1813 745 1816 743 L1890 667" stroke="#a29cf0" stroke-width="1"/>
<path d="M1784 848 L1826 765 C1827 760 1829 757 1832 754 L1905 681" stroke="#a29cf0" stroke-width="1"/>
<path d="M1809 752 L1862 782 M1826 765 L1860 770" stroke="#d0d0dc" stroke-width="1" stroke-dasharray="10 5 1.5 5" opacity=".72"/>
<path d="M1899 560 L1920 581" stroke="#3fd83f" stroke-width="1.1"/>
</g>
<clipPath id="selc"><rect x="835" y="264" width="532" height="266.5"/></clipPath>
<g fill="none" clip-path="url(#selc)"><g transform="translate(.5 .5)">
<rect x="834.5" y="263.5" width="532.5" height="267" fill="#1f3a6e"/>
<path d="M277 494 H393 C425 494 447 466 447 430 V182" stroke="#44dca6" stroke-width="1.1"/>
<path d="M277 484 H390 C417 484 436 464 436 440 V182" stroke="#9a88d0" stroke-width="1" stroke-dasharray="10 6"/>
<path d="M385 431 H447 M385 431 V494" stroke="#c088d0" stroke-width="1" stroke-dasharray="10 5 1.5 5"/>
<path d="M531 182 V432 C531 466 552 493 583 493 H1174 C1188 493 1196 486 1201 477 L1328 264 C1345 236 1370 205 1413 182" stroke="#44dca6" stroke-width="1.1"/>
<path d="M541 182 V440 C541 464 558 483 580 483 H1172 C1181 483 1188 475 1193 466 L1316 264 C1335 232 1355 205 1386 182" stroke="#9a88d0" stroke-width="1" stroke-dasharray="10 6"/>
<path d="M531 431 H593 V493" stroke="#c088d0" stroke-width="1" stroke-dasharray="10 5 1.5 5"/>
<path d="M680 182 V362 H1092 C1108 362 1120 355 1129 342 L1225 182" stroke="#a89cf0" stroke-width="1"/>
<path d="M700 182 V341 H1080 C1095 341 1107 334 1116 321 L1201 182" stroke="#a89cf0" stroke-width="1"/>
<path d="M1081 300 V342 M1092 321 V362 M1081 300 L1116 321 M1092 321 L1129 342" stroke="#c088d0" stroke-width="1" stroke-dasharray="10 5 1.5 5"/>
<path d="M876 182 C895 190 905 190 930 190 H960 C985 190 995 188 1006 182" stroke="#9a88d0" stroke-width="1" stroke-dasharray="10 6"/>
<path d="M277 193 L1920 810" stroke="#c088d0" stroke-width="1" stroke-dasharray="10 5 1.5 5"/>
<path d="M277 229 L1420 860" stroke="#c088d0" stroke-width="1" stroke-dasharray="10 5 1.5 5"/>
<path d="M277 579 H769 C803 579 831 606 831 639 V848" stroke="#44dca6" stroke-width="1.1"/>
<path d="M277 589 H774 C800 589 820 608 820 630 V848" stroke="#9a88d0" stroke-width="1" stroke-dasharray="10 6"/>
<path d="M769 578 V640 H831" stroke="#c088d0" stroke-width="1" stroke-dasharray="10 5 1.5 5"/>
<path d="M288 579 V737 H831 M288 758 H831 M288 758 V848" stroke="#a89cf0" stroke-width="1"/>
<path d="M288 182 V494" stroke="#a89cf0" stroke-width="1"/>
<path d="M915 848 V639 C915 605 942 577 977 577 H1170 C1215 577 1250 560 1270 525 L1380 339  C1383 334 1391 318 1400 306 C1408 295 1419 279 1429 270 C1439 261 1448 257 1462 252 C1476 248 1495 245 1511 244 C1527 242 1546 242 1560 244 C1574 245 1583 248 1593 254 C1602 260 1611 273 1616 280 C1620 288 1620 290 1622 300 C1624 309 1625 320 1629 336 C1632 352 1638 377 1645 395 C1652 412 1664 428 1670 440 C1675 453 1678 460 1678 470 C1679 480 1678 491 1675 499 C1672 507 1669 508 1662 518 C1655 527 1641 541 1631 554 C1621 568 1610 584 1602 598 C1593 612 1586 625 1580 638 C1573 651 1569 661 1563 677 C1557 692 1551 714 1543 733 C1536 752 1527 773 1518 792 C1508 811 1494 836 1488 848 C1482 860 1481 862 1480 865" stroke="#44dca6" stroke-width="1.1"/>
<path d="M924 848 V630 C924 606 948 588 977 588 H1187 C1230 586 1262 568 1290 515 L1380 359  C1385 351 1399 326 1410 311 C1420 297 1432 283 1445 274 C1458 264 1469 259 1488 256 C1507 252 1543 252 1560 253 C1577 255 1581 258 1589 264 C1598 269 1605 278 1609 287 C1613 295 1612 300 1616 313 C1619 326 1623 348 1629 365 C1634 383 1642 403 1648 418 C1654 432 1661 442 1665 450 C1668 459 1670 463 1670 470 C1671 477 1670 485 1667 492 C1664 499 1660 502 1653 510 C1646 519 1633 530 1624 543 C1614 556 1603 572 1594 587 C1585 602 1576 620 1569 634 C1562 649 1559 659 1552 677 C1546 694 1537 721 1528 741 C1520 760 1511 778 1503 795 C1494 813 1483 836 1477 848 C1472 859 1470 862 1469 865" stroke="#9a88d0" stroke-width="1" stroke-dasharray="10 6"/>
<path d="M977 577 V639 H915" stroke="#c088d0" stroke-width="1" stroke-dasharray="10 5 1.5 5"/>
<path d="M1174 459 V576" stroke="#c088d0" stroke-width="1" stroke-dasharray="10 5 1.5 5"/>
<path d="M1174 459 L1201 477 L1258 515" stroke="#c088d0" stroke-width="1" stroke-dasharray="10 5 1.5 5"/>
<path d="M915 737 H1335 C1352 737 1364 729 1371 715 L1531 426 C1537 414 1543 410 1552 408 L1637 375" stroke="#a89cf0" stroke-width="1"/>
<path d="M915 757 H1348 C1365 757 1377 748 1384 735 L1545 444 C1551 431 1558 427 1566 424 L1645 395" stroke="#a89cf0" stroke-width="1"/>
<path d="M1335 694 V736 M1348 715 V757 M1335 694 L1372 715 M1348 715 L1385 736" stroke="#c088d0" stroke-width="1" stroke-dasharray="10 5 1.5 5"/>
<path d="M1531 426 L1582 463 L1552 408 M1545 444 L1567 452" stroke="#c088d0" stroke-width="1" stroke-dasharray="10 5 1.5 5"/>
<path d="M1514 182 L1508 368 L1328 264" stroke="#c088d0" stroke-width="1" stroke-dasharray="10 5 1.5 5"/>
<path d="M1559 244 V306 L1920 276" stroke="#c088d0" stroke-width="1" stroke-dasharray="10 5 1.5 5"/>
<path d="M1617 473 L1920 270" stroke="#c088d0" stroke-width="1" stroke-dasharray="10 5 1.5 5"/>
<path d="M1617 473 L1662 515 L1722 573 L1761 628" stroke="#c088d0" stroke-width="1" stroke-dasharray="10 5 1.5 5"/>
<path d="M1702 220 L1920 242" stroke="#c088d0" stroke-width="1" stroke-dasharray="10 5 1.5 5"/>
<path d="M1703 182 V270  C1704 278 1705 304 1708 320 C1711 336 1714 349 1721 364 C1728 379 1741 395 1752 411 C1764 427 1773 441 1789 458 C1805 474 1831 494 1850 510 C1869 526 1889 538 1903 552 C1917 565 1930 584 1935 590" stroke="#44dca6" stroke-width="1.1"/>
<path d="M1712 182 V280  C1713 286 1713 306 1716 318 C1719 330 1721 340 1729 354 C1737 368 1753 388 1763 401 C1773 414 1774 417 1789 432 C1804 447 1828 469 1850 488 C1872 507 1908 536 1920 545" stroke="#9a88d0" stroke-width="1" stroke-dasharray="10 6"/>
<path d="M1897 182 V244 C1897 262 1904 278 1922 296" stroke="#a89cf0" stroke-width="1"/>
<path d="M1914 182 V260" stroke="#a89cf0" stroke-width="1"/>
<path d="M1898 247 H1920" stroke="#c088d0" stroke-width="1" stroke-dasharray="10 5 1.5 5"/>
<path d="M1575 860 C1576 858 1573 863 1580 848 C1587 833 1606 793 1616 770 C1627 746 1633 726 1642 706 C1650 685 1658 663 1667 646 C1677 628 1692 612 1700 602 C1708 592 1707 592 1712 587 C1718 582 1723 576 1731 572 C1738 569 1750 566 1759 565 C1767 564 1776 567 1784 570 C1791 573 1800 580 1805 584 C1809 587 1809 588 1810 589 L1920 697" stroke="#44dca6" stroke-width="1.1"/>
<path d="M1590 860 C1591 858 1589 862 1594 848 C1600 833 1614 796 1624 774 C1633 751 1641 730 1649 711 C1658 692 1666 676 1675 660 C1683 644 1692 630 1700 619 C1708 608 1712 600 1720 594 C1726 587 1734 582 1742 580 C1749 576 1756 575 1764 575 C1772 576 1786 582 1792 584 C1798 586 1797 587 1798 588 L1920 716" stroke="#9a88d0" stroke-width="1" stroke-dasharray="10 6"/>
<path d="M1717 591 L1920 761 M1734 581 L1920 742 M1770 617 L1803 585" stroke="#c088d0" stroke-width="1" stroke-dasharray="10 5 1.5 5"/>
<path d="M1760 848 L1809 752 C1811 748 1813 745 1816 743 L1890 667" stroke="#a89cf0" stroke-width="1"/>
<path d="M1784 848 L1826 765 C1827 760 1829 757 1832 754 L1905 681" stroke="#a89cf0" stroke-width="1"/>
<path d="M1809 752 L1862 782 M1826 765 L1860 770" stroke="#c088d0" stroke-width="1" stroke-dasharray="10 5 1.5 5"/>
<path d="M1899 560 L1920 581" stroke="#44dca6" stroke-width="1.1"/>
</g></g>
<rect x="414.5" y="430" width="3" height="2" fill="#e02a3a"/>
<rect x="382.5" y="462" width="3" height="2" fill="#e02a3a"/>
<rect x="559.5" y="430" width="3" height="2" fill="#e02a3a"/>
<rect x="591.5" y="461" width="3" height="2" fill="#e02a3a"/>
<rect x="799.5" y="393" width="3" height="2" fill="#e02a3a"/>
<rect x="1362.5" y="284" width="3" height="2" fill="#e02a3a"/>
<rect x="1452.5" y="335.7" width="3" height="2" fill="#e02a3a"/>
<rect x="1512.5" y="199" width="3" height="2" fill="#e02a3a"/>
<rect x="1556.5" y="274" width="3" height="2" fill="#e02a3a"/>
<rect x="1506.5" y="304" width="3" height="2" fill="#e02a3a"/>
<rect x="1453.5" y="335" width="3" height="2" fill="#e02a3a"/>
<rect x="1607.5" y="324" width="3" height="2" fill="#e02a3a"/>
<rect x="1578.5" y="441" width="3" height="2" fill="#e02a3a"/>
<rect x="1588.5" y="446" width="3" height="2" fill="#e02a3a"/>
<rect x="1670.5" y="504" width="3" height="2" fill="#e02a3a"/>
<rect x="1733.5" y="619" width="3" height="2" fill="#e02a3a"/>
<rect x="1808.5" y="609" width="3" height="2" fill="#e02a3a"/>
<rect x="1898.5" y="759" width="3" height="2" fill="#e02a3a"/>
<rect x="1838.5" y="716" width="3" height="2" fill="#e02a3a"/>
<rect x="1820.5" y="747" width="3" height="2" fill="#e02a3a"/>
<rect x="1847.5" y="769" width="3" height="2" fill="#e02a3a"/>
<rect x="918.5" y="633" width="3" height="2" fill="#e02a3a"/>
<rect x="1332.5" y="713" width="3" height="2" fill="#e02a3a"/>
<rect x="1346.5" y="734" width="3" height="2" fill="#e02a3a"/>
<rect x="1091.5" y="340" width="3" height="2" fill="#e02a3a"/>
<rect x="1079.5" y="319" width="3" height="2" fill="#e02a3a"/>
<rect x="1169.5" y="544" width="3" height="2" fill="#e02a3a"/>
<rect x="1228.5" y="486" width="3" height="2" fill="#e02a3a"/>
<rect x="767.5" y="608" width="3" height="2" fill="#e02a3a"/>
<rect x="798.5" y="637" width="3" height="2" fill="#e02a3a"/>
<rect x="974.5" y="607" width="3" height="2" fill="#e02a3a"/>
<rect x="942.5" y="637" width="3" height="2" fill="#e02a3a"/>
<rect x="1528.5" y="464" width="3" height="2" fill="#e02a3a"/>
<rect x="699" y="340" width="2.5" height="2.5" fill="#8ff"/>
<rect x="679" y="361" width="2.5" height="2.5" fill="#fff"/>
<rect x="384" y="430" width="2.5" height="2.5" fill="#fff"/>
<rect x="446" y="430" width="2.5" height="2.5" fill="#8fc"/>
<rect x="287" y="493" width="2.5" height="2.5" fill="#8ff"/>
<rect x="384" y="493" width="2.5" height="2.5" fill="#fff"/>
<rect x="530" y="430" width="2.5" height="2.5" fill="#8fc"/>
<rect x="592" y="430" width="2.5" height="2.5" fill="#8ff"/>
<rect x="592" y="492" width="2.5" height="2.5" fill="#8ff"/>
<rect x="768" y="577" width="2.5" height="2.5" fill="#8fc"/>
<rect x="768" y="639" width="2.5" height="2.5" fill="#fff"/>
<rect x="830" y="639" width="2.5" height="2.5" fill="#8fc"/>
<rect x="914" y="638" width="2.5" height="2.5" fill="#8fc"/>
<rect x="976" y="576" width="2.5" height="2.5" fill="#8fc"/>
<rect x="976" y="638" width="2.5" height="2.5" fill="#fff"/>
<rect x="287" y="736" width="2.5" height="2.5" fill="#fff"/>
<rect x="287" y="757" width="2.5" height="2.5" fill="#fff"/>
<rect x="287" y="577" width="2.5" height="2.5" fill="#8fc"/>
<rect x="830" y="736" width="2.5" height="2.5" fill="#fff"/>
<rect x="830" y="756" width="2.5" height="2.5" fill="#fff"/>
<rect x="914" y="736" width="2.5" height="2.5" fill="#fff"/>
<rect x="914" y="756" width="2.5" height="2.5" fill="#fff"/>
<rect x="1334" y="693" width="2.5" height="2.5" fill="#fff"/>
<rect x="1334" y="735" width="2.5" height="2.5" fill="#fff"/>
<rect x="1347" y="714" width="2.5" height="2.5" fill="#fff"/>
<rect x="1347" y="756" width="2.5" height="2.5" fill="#8ff"/>
<rect x="1371" y="714" width="2.5" height="2.5" fill="#8ff"/>
<rect x="1384" y="735" width="2.5" height="2.5" fill="#8ff"/>
<rect x="1530" y="425" width="2.5" height="2.5" fill="#8ff"/>
<rect x="1551" y="407" width="2.5" height="2.5" fill="#fff"/>
<rect x="1566" y="423" width="2.5" height="2.5" fill="#fff"/>
<rect x="1545" y="443" width="2.5" height="2.5" fill="#8ff"/>
<rect x="1582" y="462" width="2.5" height="2.5" fill="#fff"/>
<rect x="1636" y="374" width="2.5" height="2.5" fill="#8fc"/>
<rect x="1644" y="394" width="2.5" height="2.5" fill="#8fc"/>
<rect x="1616" y="472" width="2.5" height="2.5" fill="#fff"/>
<rect x="1559" y="304" width="2.5" height="2.5" fill="#fff"/>
<rect x="1506" y="367" width="2.5" height="2.5" fill="#fff"/>
<rect x="1895" y="246" width="2.5" height="2.5" fill="#fff"/>
<rect x="1910" y="282" width="2.5" height="2.5" fill="#8ff"/>
<rect x="1711" y="586" width="2.5" height="2.5" fill="#8fc"/>
<rect x="1804" y="583" width="2.5" height="2.5" fill="#8fc"/>
<rect x="1888" y="666" width="2.5" height="2.5" fill="#8fc"/>
<rect x="1904" y="680" width="2.5" height="2.5" fill="#8fc"/>
<rect x="1808" y="751" width="2.5" height="2.5" fill="#8ff"/>
<rect x="1831" y="753" width="2.5" height="2.5" fill="#8ff"/>
<rect x="1701" y="218" width="2.5" height="2.5" fill="#fff"/>
<rect x="1169" y="575" width="2.5" height="2.5" fill="#8fc"/>
<rect x="1172" y="458" width="2.5" height="2.5" fill="#fff"/>
<path d="M834.5 531 V263.5 H1367 V462" fill="none" stroke="#d8dce8" stroke-width="1.2"/>
<path d="M834.5 530.7 H1299" stroke="#e8e8e0" stroke-width="1.2"/>
<path d="M1367.4 462 V598.8 M1367 530.7 H1435.4" stroke="#fff" stroke-width="1.3"/>
<rect x="1385.5" y="496.5" width="17" height="17" fill="none" stroke="#fff" stroke-width="1.2"/><circle cx="1394" cy="505" r="4" fill="#2a6cf0"/>
<rect x="304.5" y="811.5" width="12.5" height="12.5" fill="none" stroke="#fff" stroke-width="1.2"/>
<path d="M310 812 L307.5 761" stroke="#3fc43f" stroke-width="1.2"/><path d="M307 744 L301 761 L314 761 Z" fill="none" stroke="#3fc43f" stroke-width="1.2"/>
<path d="M317 817 L366 815" stroke="#d83030" stroke-width="1.2"/><path d="M385 814.5 L366 808 L366 821 Z" fill="none" stroke="#d83030" stroke-width="1.2"/>
<text x="300" y="731" font-family="Liberation Sans" font-size="14" fill="#fff">Y</text>
<text x="398" y="820" font-family="Liberation Sans" font-size="14" fill="#fff">X</text>
</svg>
<div class="a" style="left:5px;top:6px;width:29px;height:16px;background:#3a3a3a;opacity:.9"></div>
<div class="a" style="left:7px;top:7px;font-size:11.5px;line-height:14px;color:#5c5c5c">Top</div>
<div class="a" style="left:39px;top:6px;width:75px;height:16px;background:#3a3a3a;opacity:.9"></div>
<div class="a" style="left:43px;top:7px;font-size:11.5px;line-height:14px;color:#5c5c5c;letter-spacing:-0.3px">2D Wireframe</div>
<div class="a" style="left:1584px;top:7px;width:55px;height:14px;background:#3a3a3a"></div>
<svg style="left:1590px;top:9px" width="50" height="11"><path d="M2 9 h6" stroke="#111" stroke-width="2"/><rect x="18.5" y="3.5" width="6" height="6" fill="none" stroke="#111"/><path d="M20.5 3.5 v-2 h6 v6 h-2" fill="none" stroke="#111"/><path d="M36 1 l8 8 M44 1 l-8 8" stroke="#111" stroke-width="1.4"/></svg>
<div class="a" style="left:1540px;top:72px;width:44px;height:42px;background:#6e6e6e;transform:rotate(-3deg);border:1px solid #7a7a7a"></div>
<div class="a" style="left:1549px;top:82px;width:24px;height:20px;background:#5a5a5a;transform:rotate(-3deg)"></div>
<div class="a" style="left:1551px;top:85px;font-size:11px;line-height:13px;color:#222;transform:scaleX(.85)">TOP</div>
<div class="a" style="left:1546px;top:147px;width:29px;height:17px;background:#5e5e5e;border-radius:5px"></div>
<div class="a" style="left:1547px;top:149px;font-size:11.5px;line-height:13px;color:#2a2a2a;letter-spacing:-0.3px">WCS</div>
</div><div class="a" style="left:277px;top:182px;width:1643px;height:1px;background:#d2d5d5"></div>
<div class="a" style="left:1788px;top:367px;width:111px;height:201px;background:#f0f0f0;border-radius:3px;border:1px solid #d8d8d8"></div>
<div class="a" style="left:1796px;top:374px;font-size:12.3px;line-height:15px;color:#9a9a9a">Hot Toggles!</div>
<div class="a" style="left:1879px;top:374px;width:19px;height:19px;background:#d6d6d6"></div>
<div class="a" style="left:1792px;top:400px;width:12px;height:12px;background:#1b5fbf;border-radius:2px"></div>
<svg style="left:1793px;top:400px" width="11" height="11"><path d="M2.5 5.5 l2.2 2.2 l4 -4.5" stroke="#fff" stroke-width="1.2" fill="none"/></svg>
<div class="a" style="left:1807px;top:399px;font-size:11.3px;line-height:14px;color:#111;white-space:nowrap;letter-spacing:-0.15px">Point Protection</div>
<div class="a" style="left:1792px;top:416px;width:12px;height:12px;background:#1b5fbf;border-radius:2px"></div>
<svg style="left:1793px;top:415px" width="11" height="11"><path d="M2.5 5.5 l2.2 2.2 l4 -4.5" stroke="#fff" stroke-width="1.2" fill="none"/></svg>
<div class="a" style="left:1807px;top:414px;font-size:11.3px;line-height:14px;color:#111;white-space:nowrap;letter-spacing:-0.15px">Log File Output</div>
<div class="a" style="left:1792px;top:431px;width:12px;height:12px;background:#fff;border:1px solid #555;border-radius:2px"></div>
<div class="a" style="left:1807px;top:429px;font-size:11.3px;line-height:14px;color:#111;white-space:nowrap;letter-spacing:-0.15px">Input scale</div>
<div class="a" style="left:1792px;top:445px;width:12px;height:12px;background:#fff;border:1px solid #555;border-radius:2px"></div>
<div class="a" style="left:1807px;top:444px;font-size:11.3px;line-height:14px;color:#111;white-space:nowrap;letter-spacing:-0.15px">Output scale</div>
<div class="a" style="left:1792px;top:460px;width:12px;height:12px;background:#1b5fbf;border-radius:2px"></div>
<svg style="left:1793px;top:459px" width="11" height="11"><path d="M2.5 5.5 l2.2 2.2 l4 -4.5" stroke="#fff" stroke-width="1.2" fill="none"/></svg>
<div class="a" style="left:1807px;top:458px;font-size:11.3px;line-height:14px;color:#111;white-space:nowrap;letter-spacing:-0.15px">Draw lines/curves</div>
<div class="a" style="left:1792px;top:474px;width:12px;height:12px;background:#1b5fbf;border-radius:2px"></div>
<svg style="left:1793px;top:474px" width="11" height="11"><path d="M2.5 5.5 l2.2 2.2 l4 -4.5" stroke="#fff" stroke-width="1.2" fill="none"/></svg>
<div class="a" style="left:1807px;top:473px;font-size:11.3px;line-height:14px;color:#111;white-space:nowrap;letter-spacing:-0.15px">Draw distances</div>
<div class="a" style="left:1792px;top:489px;width:12px;height:12px;background:#1b5fbf;border-radius:2px"></div>
<svg style="left:1793px;top:489px" width="11" height="11"><path d="M2.5 5.5 l2.2 2.2 l4 -4.5" stroke="#fff" stroke-width="1.2" fill="none"/></svg>
<div class="a" style="left:1807px;top:488px;font-size:11.3px;line-height:14px;color:#111;white-space:nowrap;letter-spacing:-0.15px">Draw bearings</div>
<div class="a" style="left:1793px;top:507px;font-size:11.3px;line-height:14px;color:#111;letter-spacing:-0.2px">Next pt:</div>
<div class="a" style="left:1836px;top:505px;width:60px;height:18px;background:#fff;border-bottom:1px solid #bbb"></div>
<div class="a" style="left:1839px;top:507px;font-size:11.3px;line-height:14px;color:#111">496</div>
<div class="a" style="left:1795px;top:529px;font-size:11.3px;line-height:14px;color:#111;letter-spacing:-0.2px">Low pt:</div>
<div class="a" style="left:1836px;top:527px;width:60px;height:17px;background:#ececec;border-bottom:1px solid #bbb"></div>
<div class="a" style="left:1839px;top:528px;font-size:11.3px;line-height:14px;color:#111">496</div>
<div class="a" style="left:1804px;top:549px;width:78px;height:14px;background:#fdfdfd;border:1px solid #aaa;border-radius:3px"></div>
<div class="a" style="left:1804px;top:549px;width:78px;font-size:11.3px;line-height:14px;color:#111;text-align:center">Refresh</div>
<div class="a" style="left:277px;top:848px;width:1643px;height:18px;background:linear-gradient(#f7f7f7,#e6e6e6)"></div>
<div class="a" style="left:277px;top:848px;width:15px;height:16px;background:#f2f2f2;border:1px solid #c4c4c4"></div>
<div class="a" style="left:294px;top:848px;width:15px;height:16px;background:#f2f2f2;border:1px solid #c4c4c4"></div>
<div class="a" style="left:311px;top:848px;width:15px;height:16px;background:#f2f2f2;border:1px solid #c4c4c4"></div>
<div class="a" style="left:328px;top:848px;width:15px;height:16px;background:#f2f2f2;border:1px solid #c4c4c4"></div>
<div class="a" style="left:345px;top:848px;width:17px;height:16px;background:#f2f2f2;border:1px solid #c4c4c4"></div>
<svg style="left:277px;top:848px" width="90" height="17"><path d="M4.5 3.5 v9" stroke="#111" stroke-width="1.6"/><path d="M10.5 3.5 l-5 4.5 l5 4.5 z" fill="#111"/><path d="M27 3.5 l-5 4.5 l5 4.5 z" fill="#111"/><path d="M40 3.5 l5 4.5 l-5 4.5 z" fill="#111"/><path d="M56 3.5 l5 4.5 l-5 4.5 z" fill="#111"/><path d="M62 3.5 v9" stroke="#111" stroke-width="1.6"/><path d="M70.5 8 h10 M75.5 3 v10" stroke="#111" stroke-width="2.2"/></svg>
<svg style="left:277px;top:848px" width="280" height="17"><path d="M90.4 0 L98.4 16.5 M137.8 16.5 L144.4 1.5 M141 9 L146 16.5 M196.9 1.5 L205.6 16.5 M196 16 L200.5 9 M255.2 16.5 L262.5 1.5" stroke="#222" stroke-width="1.1" fill="none"/></svg>
<div class="a" style="left:379px;top:850px;font-size:11.5px;line-height:14px;font-weight:bold;color:#111;letter-spacing:-0.4px">Model</div>
<div class="a" style="left:429px;top:850px;font-size:11.3px;line-height:14px;color:#111;letter-spacing:-0.3px">Layout1</div>
<div class="a" style="left:488px;top:850px;font-size:11.3px;line-height:14px;color:#111;letter-spacing:-0.3px">Layout2</div>
<div class="a" style="left:0;top:863px;width:277px;height:3px;background:#f0f0f0"></div>
<div class="a" style="left:0;top:866px;width:1920px;height:5px;background:#565656"></div>
<div class="a" style="left:0;top:871px;width:1920px;height:2px;background:#9c9c9c"></div>
<div class="a" style="left:0;top:873px;width:20px;height:129px;background:#a8a8a8"></div>
<svg style="left:4px;top:875px" width="12" height="12"><path d="M1.5 1.5 l8 8 M9.5 1.5 l-8 8" stroke="#111" stroke-width="1.3"/></svg>
<svg style="left:4px;top:896px" width="12" height="8"><path d="M1 1 h10 l-5 5 z" fill="#111"/></svg>
<div class="a" style="left:21px;top:873px;width:1897px;height:107px;background:#fff"></div>
<div class="a" style="left:1902px;top:873px;width:16px;height:107px;background:#efefef"></div>
<div class="a" style="left:1909px;top:946px;width:2px;height:17px;background:#707070"></div>
<div class="a" style="left:21px;top:980px;width:1897px;height:1px;background:#8a8a8a"></div>
<div class="a" style="left:21px;top:981px;width:1897px;height:21px;background:#fff"></div>
<div class="a" style="left:1918px;top:873px;width:2px;height:129px;background:#a8a8a8"></div>
<div class="a" style="left:26px;top:874px;font-family:'Liberation Mono',monospace;font-size:13.2px;line-height:16px;color:#111;white-space:pre">Command:</div>
<div class="a" style="left:26px;top:890px;font-family:'Liberation Mono',monospace;font-size:13.2px;line-height:16px;color:#111;white-space:pre">Command:</div>
<div class="a" style="left:26px;top:906px;font-family:'Liberation Mono',monospace;font-size:13.2px;line-height:16px;color:#111;white-space:pre">Command: (CLICK_HANDLER)nil</div>
<div class="a" style="left:26px;top:922px;font-family:'Liberation Mono',monospace;font-size:13.2px;line-height:16px;color:#111;white-space:pre">Command:</div>
<div class="a" style="left:26px;top:938px;font-family:'Liberation Mono',monospace;font-size:13.2px;line-height:16px;color:#111;white-space:pre">Opposite corner:</div>
<div class="a" style="left:26px;top:954px;font-family:'Liberation Mono',monospace;font-size:13.2px;line-height:16px;color:#111;white-space:pre">Command:</div>
<div class="a" style="left:23px;top:982px;font-family:'Liberation Mono',monospace;font-size:13.2px;line-height:16px;color:#111;white-space:pre">Opposite corner:</div><div class="a" style="left:0;top:1002px;width:1920px;height:31px;background:linear-gradient(#474749,#353537 40%,#303032)"></div>
<div class="a" style="left:1010px;top:1005px;width:1px;height:25px;background:#5a5a5c"></div>
<div class="a" style="left:1020px;top:1005px;width:1px;height:25px;background:#5a5a5c"></div>
<div class="a" style="left:1209px;top:1005px;width:1px;height:25px;background:#5a5a5c"></div>
<div class="a" style="left:1238px;top:1005px;width:1px;height:25px;background:#5a5a5c"></div>
<div class="a" style="left:1269px;top:1005px;width:1px;height:25px;background:#5a5a5c"></div>
<div class="a" style="left:1318px;top:1005px;width:1px;height:25px;background:#5a5a5c"></div>
<div class="a" style="left:1347px;top:1005px;width:1px;height:25px;background:#5a5a5c"></div>
<div class="a" style="left:1378px;top:1005px;width:1px;height:25px;background:#5a5a5c"></div>
<div class="a" style="left:1407px;top:1005px;width:1px;height:25px;background:#5a5a5c"></div>
<div class="a" style="left:1438px;top:1005px;width:1px;height:25px;background:#5a5a5c"></div>
<div class="a" style="left:1467px;top:1005px;width:1px;height:25px;background:#5a5a5c"></div>
<div class="a" style="left:1497px;top:1005px;width:1px;height:25px;background:#5a5a5c"></div>
<div class="a" style="left:1527px;top:1005px;width:1px;height:25px;background:#5a5a5c"></div>
<div class="a" style="left:1557px;top:1005px;width:1px;height:25px;background:#5a5a5c"></div>
<div class="a" style="left:1587px;top:1005px;width:1px;height:25px;background:#5a5a5c"></div>
<div class="a" style="left:1617px;top:1005px;width:1px;height:25px;background:#5a5a5c"></div>
<div class="a" style="left:1662px;top:1005px;width:1px;height:25px;background:#5a5a5c"></div>
<div class="a" style="left:1703px;top:1005px;width:1px;height:25px;background:#5a5a5c"></div>
<div class="a" style="left:1734px;top:1005px;width:1px;height:25px;background:#5a5a5c"></div>
<div class="a" style="left:1763px;top:1005px;width:1px;height:25px;background:#5a5a5c"></div>
<div class="a" style="left:1793px;top:1005px;width:1px;height:25px;background:#5a5a5c"></div>
<div class="a" style="left:1823px;top:1005px;width:1px;height:25px;background:#5a5a5c"></div>
<div class="a" style="left:1853px;top:1005px;width:1px;height:25px;background:#5a5a5c"></div>
<div class="a" style="left:1883px;top:1005px;width:1px;height:25px;background:#5a5a5c"></div>
<svg style="left:1022px;top:1005px" width="22" height="22"><path d="M3 14 h14 M10 7 v14" stroke="#e82020" stroke-width="2.5"/><path d="M12 10 l8 -8 M16 2 h4 v4" stroke="#3a7ad0" stroke-width="1.5" fill="none"/></svg>
<div class="a" style="left:1051px;top:1011px;font-size:11.3px;line-height:15px;color:#f0f0f0;letter-spacing:-0.2px">296312.609,6182765.434,0.000</div>
<div class="a" style="left:1213px;top:1007px;width:22px;height:22px;background:#a0a0a0;border:1.5px solid #e8e8e8"></div>
<svg style="left:1215px;top:1009px" width="19" height="19"><path d="M0 19 L19 0 V19 Z" fill="#fff"/><path d="M2 9 h8 v9" stroke="#e02020" stroke-width="1.2" fill="none"/><rect x="9" y="7" width="4" height="4" fill="none" stroke="#30c0c0"/></svg>
<svg style="left:1243px;top:1008px" width="20" height="20"><path d="M1 10 h18" stroke="#e02020" stroke-width="1.3"/><path d="M10 1 v18" stroke="#2aa040" stroke-width="1"/><rect x="8" y="8" width="4" height="4" fill="none" stroke="#f0a030"/></svg>
<svg style="left:1274px;top:1008px" width="20" height="20"><path d="M10 1 L12 12 L20 18 L10 14 L0 18 L8 12 Z" fill="#e8e8e8"/></svg>
<div class="a" style="left:1300px;top:1011px;font-size:12.3px;line-height:15px;color:#f0f0f0">1:1</div>
<div class="a" style="left:1322px;top:1007px;width:22px;height:22px;background:#a0a0a0;border:1.5px solid #e8e8e8"></div>
<svg style="left:1324px;top:1009px" width="19" height="19"><path d="M9 1 L11 11 L18 17 L9 13 L0 17 L7 11 Z" fill="#e8e8f0"/><path d="M9 2 L7 11 L0 17" stroke="#4a50b0" fill="none"/><circle cx="13" cy="12" r="4" fill="#f0f080"/></svg>
<svg style="left:1353px;top:1008px" width="22" height="20"><path d="M10 1 L12 12 L20 18 L10 14 L0 18 L8 12 Z" fill="#e8e8e8"/><path d="M14 2 l-3 5 h4 l-3 5" stroke="#a0c040" fill="none" stroke-width="1.3"/></svg>
<svg style="left:1384px;top:1009px" width="18" height="18"><rect x="3" y="2" width="2.5" height="2.5" fill="#f0f0f0"/><rect x="3" y="8" width="2.5" height="2.5" fill="#f0f0f0"/><rect x="3" y="13" width="2.5" height="2.5" fill="#f0f0f0"/><rect x="8" y="2" width="2.5" height="2.5" fill="#f0f0f0"/><rect x="8" y="8" width="2.5" height="2.5" fill="#f0f0f0"/><rect x="8" y="13" width="2.5" height="2.5" fill="#f0f0f0"/><rect x="13" y="2" width="2.5" height="2.5" fill="#f0f0f0"/><rect x="13" y="8" width="2.5" height="2.5" fill="#f0f0f0"/><rect x="13" y="13" width="2.5" height="2.5" fill="#f0f0f0"/><rect x="2" y="12" width="4" height="4" fill="#e02030"/></svg>
<div class="a" style="left:1412px;top:1007px;width:22px;height:22px;background:#a0a0a0;border:1.5px solid #e8e8e8"></div>
<svg style="left:1414px;top:1009px" width="19" height="19"><path d="M5 1 v17 M9.5 1 v17 M14 1 v17 M1 5 h17 M1 9.5 h17 M1 14 h17" stroke="#444" stroke-width="1.2"/></svg>
<svg style="left:1443px;top:1008px" width="20" height="20"><path d="M6 2 v8 M2 6 h8" stroke="#fff" stroke-width="1.5"/><rect x="6" y="12" width="12" height="5" fill="#fff"/></svg>
<svg style="left:1474px;top:1008px" width="20" height="20"><path d="M3 2 v15 h15" stroke="#2aa040" stroke-width="1.2" fill="none"/><path d="M3 17 h15" stroke="#e02020" stroke-width="1.3"/><path d="M6 7 h5 v8" stroke="#fff" fill="none" stroke-width="1.3"/></svg>
<svg style="left:1502px;top:1008px" width="20" height="20"><circle cx="10" cy="10" r="7" fill="none" stroke="#e8e8e8" stroke-width="1.8"/><path d="M10 10 h7 M10 3 a7 7 0 0 1 7 7" stroke="#e02020" stroke-width="1.8" fill="none"/></svg>
<svg style="left:1532px;top:1007px" width="22" height="22"><rect x="5" y="5" width="14" height="14" fill="none" stroke="#f0f0f0" stroke-width="1.6"/><rect x="2" y="2" width="5" height="5" fill="#e02020"/></svg>
<svg style="left:1563px;top:1008px" width="20" height="20"><path d="M2 17 h14 M2 17 L16 4 M8 6 l6 8" stroke="#e8e8e8" stroke-width="1.2" fill="none"/></svg>
<svg style="left:1592px;top:1008px" width="20" height="20"><path d="M2 3 h16 M2 9 h16 M2 15 h9" stroke="#f0f0f0" stroke-width="2.5"/></svg>
<div class="a" style="left:1621px;top:1011px;font-size:12px;line-height:15px;color:#f0f0f0;letter-spacing:-0.3px">MODEL</div>
<div class="a" style="left:1666px;top:1011px;font-size:11.6px;line-height:15px;color:#8a8a8a;letter-spacing:-0.7px">TABLET</div>
<svg style="left:1708px;top:1007px" width="22" height="22"><circle cx="11" cy="11" r="6.5" fill="#1f5fd0"/><path d="M11 2 v18 M2 11 h18 M4.6 4.6 l12.8 12.8 M17.4 4.6 l-12.8 12.8" stroke="#1f5fd0" stroke-width="3.5"/><circle cx="11" cy="11" r="2" fill="#2a3a5a"/></svg>
<svg style="left:1738px;top:1007px" width="22" height="22"><rect x="1" y="2" width="9" height="9" fill="#fff"/><circle cx="16" cy="8" r="5" fill="#fff"/><path d="M10 10 L20 20 H0 Z" fill="#fff"/></svg>
<svg style="left:1770px;top:1007px" width="20" height="22"><circle cx="10" cy="6" r="4" fill="none" stroke="#ddd" stroke-width="2.5"/><path d="M7 10 l-3 10 l6 -4 l6 4 l-3 -10" fill="#ddd"/></svg>
<svg style="left:1797px;top:1008px" width="24" height="20"><rect x="2" y="1" width="20" height="14" fill="#fff" stroke="#2a6ad0" stroke-width="2"/><path d="M8 11 l8 -7 M16 4 h-3 M16 4 v3 M8 11 h3 M8 11 v-3" stroke="#2a4a8a" stroke-width="1.3"/><rect x="6" y="17" width="12" height="2.5" fill="#2a6ad0"/></svg>
<svg style="left:1828px;top:1007px" width="22" height="22"><rect x="1" y="1" width="13" height="10" fill="#fff"/><rect x="1" y="1" width="13" height="2" fill="#2a6ad0"/><rect x="7" y="9" width="14" height="11" fill="#fff"/><rect x="7" y="9" width="14" height="2" fill="#2a6ad0"/></svg>
<div class="a" style="left:1858px;top:1007px;width:22px;height:22px;background:#8a8a8a;border:1.5px solid #e8e8e8"></div>
<svg style="left:1860px;top:1009px" width="19" height="19"><circle cx="9.5" cy="9.5" r="7" fill="#fff" stroke="#222" stroke-width="1.8"/><path d="M6 13 l7 -7" stroke="#2a6ad0" stroke-width="1.8"/></svg>
<svg style="left:1888px;top:1008px" width="21" height="21"><circle cx="10.5" cy="10.5" r="9" fill="#58b848"/><circle cx="8" cy="7" r="4" fill="#9ee08a"/><path d="M5 15 l10 -9 M10 4 v12 M4 10 h12" stroke="#fff" stroke-width="1.3"/></svg></body></html>
